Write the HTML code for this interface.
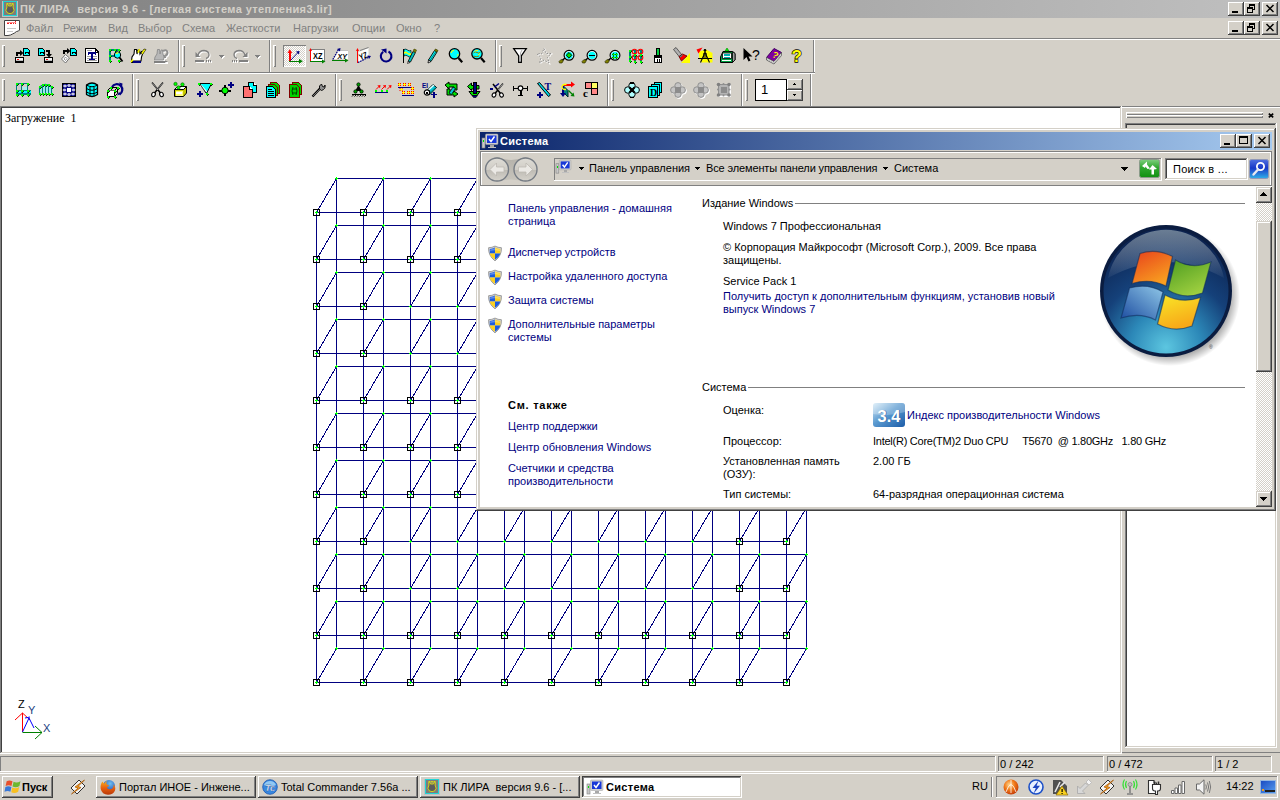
<!DOCTYPE html>
<html lang="ru"><head><meta charset="utf-8"><title>ПК ЛИРА</title>
<style>
html,body{margin:0;padding:0}
body{width:1280px;height:800px;overflow:hidden;background:#d4d0c8;position:relative;font-family:"Liberation Sans",sans-serif;font-size:11px}
svg{position:absolute;overflow:visible}
</style></head><body>
<div style="position:absolute;left:0;top:0;width:1280px;height:18px;background:linear-gradient(90deg,#808080 0%,#c0c0c0 100%)"></div>
<svg style="left:2px;top:1px" width="16" height="16" viewBox="0 0 16 16" shape-rendering="crispEdges"><rect x="0" y="0" width="16" height="16" fill="#c0c0c0"/><rect x="1.500" y=".5" width="13" height="14" fill="#7c7c7c" stroke="#20d4d4"/><path d="M5.200 2Q4.200 4 5 6Q2.500 9.500 5.500 12Q8 13.200 10.500 12Q13.500 9.500 11 6Q11.800 4 10.800 2Q10 4.500 9.500 5H6.500Q6 4.500 5.200 2Z" fill="#5c5c5c" stroke="#f0f000" stroke-width=".8" shape-rendering="auto"/><path d="M6.500 2.800H9.500" stroke="#f0f000" stroke-width="1" shape-rendering="auto"/></svg>
<div style="position:absolute;left:20px;top:3px;font-family:'Liberation Sans',sans-serif;font-size:11px;line-height:13px;color:#d4d0c8;white-space:pre;font-weight:bold;letter-spacing:0.4px">ПК ЛИРА  версия 9.6 - [легкая система утепления3.lir]</div>
<div style="position:absolute;left:1228px;top:2px;width:16px;height:14px;background:#d4d0c8;box-shadow:inset -1px -1px 0 #404040,inset 1px 1px 0 #ffffff,inset -2px -2px 0 #808080,inset 2px 2px 0 #d4d0c8;"><svg style="left:0;top:0" width="16" height="14" viewBox="0 0 16 14" shape-rendering="crispEdges"><rect x="4" y="9" width="6" height="2" fill="#000"/></svg></div>
<div style="position:absolute;left:1244px;top:2px;width:16px;height:14px;background:#d4d0c8;box-shadow:inset -1px -1px 0 #404040,inset 1px 1px 0 #ffffff,inset -2px -2px 0 #808080,inset 2px 2px 0 #d4d0c8;"><svg style="left:0;top:0" width="16" height="14" viewBox="0 0 16 14" shape-rendering="crispEdges"><rect x="5.5" y="2.5" width="5" height="5" fill="none" stroke="#000"/><rect x="5" y="2" width="6" height="2" fill="#000"/><rect x="3.5" y="5.5" width="5" height="5" fill="#d4d0c8" stroke="#000"/><rect x="3" y="5" width="6" height="2" fill="#000"/></svg></div>
<div style="position:absolute;left:1262px;top:2px;width:16px;height:14px;background:#d4d0c8;box-shadow:inset -1px -1px 0 #404040,inset 1px 1px 0 #ffffff,inset -2px -2px 0 #808080,inset 2px 2px 0 #d4d0c8;"><svg style="left:0;top:0" width="16" height="14" viewBox="0 0 16 14" shape-rendering="crispEdges"><path d="M4.5 3 L11.5 10 M11.5 3 L4.5 10" stroke="#000" stroke-width="1.5" shape-rendering="auto" fill="none"/></svg></div>
<div style="position:absolute;left:1228px;top:21px;width:16px;height:14px;background:#d4d0c8;box-shadow:inset -1px -1px 0 #404040,inset 1px 1px 0 #ffffff,inset -2px -2px 0 #808080,inset 2px 2px 0 #d4d0c8;"><svg style="left:0;top:0" width="16" height="14" viewBox="0 0 16 14" shape-rendering="crispEdges"><rect x="4" y="9" width="6" height="2" fill="#000"/></svg></div>
<div style="position:absolute;left:1244px;top:21px;width:16px;height:14px;background:#d4d0c8;box-shadow:inset -1px -1px 0 #404040,inset 1px 1px 0 #ffffff,inset -2px -2px 0 #808080,inset 2px 2px 0 #d4d0c8;"><svg style="left:0;top:0" width="16" height="14" viewBox="0 0 16 14" shape-rendering="crispEdges"><rect x="5.5" y="2.5" width="5" height="5" fill="none" stroke="#000"/><rect x="5" y="2" width="6" height="2" fill="#000"/><rect x="3.5" y="5.5" width="5" height="5" fill="#d4d0c8" stroke="#000"/><rect x="3" y="5" width="6" height="2" fill="#000"/></svg></div>
<div style="position:absolute;left:1262px;top:21px;width:16px;height:14px;background:#d4d0c8;box-shadow:inset -1px -1px 0 #404040,inset 1px 1px 0 #ffffff,inset -2px -2px 0 #808080,inset 2px 2px 0 #d4d0c8;"><svg style="left:0;top:0" width="16" height="14" viewBox="0 0 16 14" shape-rendering="crispEdges"><path d="M4.5 3 L11.5 10 M11.5 3 L4.5 10" stroke="#000" stroke-width="1.5" shape-rendering="auto" fill="none"/></svg></div>
<svg style="left:4px;top:20px" width="16" height="17" viewBox="0 0 16 17" shape-rendering="crispEdges"><path d="M.5 .5H15.500V10L14.500 11L12.500 11.500L10.500 13L8.500 14L6.500 15L4 15.500H.5Z" fill="#fff" stroke="#404040" shape-rendering="auto"/><rect x="3" y="2" width="2" height="2" fill="#f02020"/><rect x="6" y="2" width="2" height="2" fill="#f02020"/><rect x="9" y="2" width="1" height="2" fill="#f02020"/><rect x="11" y="1" width="1" height="3" fill="#f02020"/><rect x="3" y="2" width="9" height="1" fill="#ff9090"/><rect x="3" y="8" width="9" height="1" fill="#c8c8c8"/><rect x="3" y="11" width="6" height="1" fill="#c8c8c8"/></svg>
<div style="position:absolute;left:26px;top:22px;font-family:'Liberation Sans',sans-serif;font-size:11px;line-height:13px;color:#808080;white-space:pre;">Файл</div>
<div style="position:absolute;left:63px;top:22px;font-family:'Liberation Sans',sans-serif;font-size:11px;line-height:13px;color:#808080;white-space:pre;">Режим</div>
<div style="position:absolute;left:108px;top:22px;font-family:'Liberation Sans',sans-serif;font-size:11px;line-height:13px;color:#808080;white-space:pre;">Вид</div>
<div style="position:absolute;left:138px;top:22px;font-family:'Liberation Sans',sans-serif;font-size:11px;line-height:13px;color:#808080;white-space:pre;">Выбор</div>
<div style="position:absolute;left:182px;top:22px;font-family:'Liberation Sans',sans-serif;font-size:11px;line-height:13px;color:#808080;white-space:pre;">Схема</div>
<div style="position:absolute;left:226px;top:22px;font-family:'Liberation Sans',sans-serif;font-size:11px;line-height:13px;color:#808080;white-space:pre;">Жесткости</div>
<div style="position:absolute;left:293px;top:22px;font-family:'Liberation Sans',sans-serif;font-size:11px;line-height:13px;color:#808080;white-space:pre;">Нагрузки</div>
<div style="position:absolute;left:352px;top:22px;font-family:'Liberation Sans',sans-serif;font-size:11px;line-height:13px;color:#808080;white-space:pre;">Опции</div>
<div style="position:absolute;left:396px;top:22px;font-family:'Liberation Sans',sans-serif;font-size:11px;line-height:13px;color:#808080;white-space:pre;">Окно</div>
<div style="position:absolute;left:434px;top:22px;font-family:'Liberation Sans',sans-serif;font-size:11px;line-height:13px;color:#808080;white-space:pre;">?</div>
<div style="position:absolute;left:0px;top:38px;width:1280px;height:1px;background:#808080;"></div>
<div style="position:absolute;left:0px;top:39px;width:1280px;height:1px;background:#ffffff;"></div>
<div style="position:absolute;left:0px;top:72px;width:815px;height:1px;background:#808080;"></div>
<div style="position:absolute;left:0px;top:73px;width:815px;height:1px;background:#ffffff;"></div>
<div style="position:absolute;left:2px;top:45px;width:3px;height:22px;background:#d4d0c8;box-shadow:inset 1px 1px 0 #ffffff,inset -1px -1px 0 #808080;"></div>
<div style="position:absolute;left:182px;top:45px;width:3px;height:22px;background:#d4d0c8;box-shadow:inset 1px 1px 0 #ffffff,inset -1px -1px 0 #808080;"></div>
<div style="position:absolute;left:273px;top:45px;width:3px;height:22px;background:#d4d0c8;box-shadow:inset 1px 1px 0 #ffffff,inset -1px -1px 0 #808080;"></div>
<div style="position:absolute;left:499px;top:45px;width:3px;height:22px;background:#d4d0c8;box-shadow:inset 1px 1px 0 #ffffff,inset -1px -1px 0 #808080;"></div>
<div style="position:absolute;left:178px;top:40px;width:1px;height:32px;background:#808080;"></div><div style="position:absolute;left:179px;top:40px;width:1px;height:32px;background:#ffffff;"></div>
<div style="position:absolute;left:269px;top:40px;width:1px;height:32px;background:#808080;"></div><div style="position:absolute;left:270px;top:40px;width:1px;height:32px;background:#ffffff;"></div>
<div style="position:absolute;left:495px;top:40px;width:1px;height:32px;background:#808080;"></div><div style="position:absolute;left:496px;top:40px;width:1px;height:32px;background:#ffffff;"></div>
<div style="position:absolute;left:813px;top:40px;width:1px;height:32px;background:#808080;"></div><div style="position:absolute;left:814px;top:40px;width:1px;height:32px;background:#ffffff;"></div>
<div style="position:absolute;left:2px;top:79px;width:3px;height:22px;background:#d4d0c8;box-shadow:inset 1px 1px 0 #ffffff,inset -1px -1px 0 #808080;"></div>
<div style="position:absolute;left:136px;top:79px;width:3px;height:22px;background:#d4d0c8;box-shadow:inset 1px 1px 0 #ffffff,inset -1px -1px 0 #808080;"></div>
<div style="position:absolute;left:339px;top:79px;width:3px;height:22px;background:#d4d0c8;box-shadow:inset 1px 1px 0 #ffffff,inset -1px -1px 0 #808080;"></div>
<div style="position:absolute;left:611px;top:79px;width:3px;height:22px;background:#d4d0c8;box-shadow:inset 1px 1px 0 #ffffff,inset -1px -1px 0 #808080;"></div>
<div style="position:absolute;left:745px;top:79px;width:3px;height:22px;background:#d4d0c8;box-shadow:inset 1px 1px 0 #ffffff,inset -1px -1px 0 #808080;"></div>
<div style="position:absolute;left:132px;top:74px;width:1px;height:32px;background:#808080;"></div><div style="position:absolute;left:133px;top:74px;width:1px;height:32px;background:#ffffff;"></div>
<div style="position:absolute;left:335px;top:74px;width:1px;height:32px;background:#808080;"></div><div style="position:absolute;left:336px;top:74px;width:1px;height:32px;background:#ffffff;"></div>
<div style="position:absolute;left:607px;top:74px;width:1px;height:32px;background:#808080;"></div><div style="position:absolute;left:608px;top:74px;width:1px;height:32px;background:#ffffff;"></div>
<div style="position:absolute;left:741px;top:74px;width:1px;height:32px;background:#808080;"></div><div style="position:absolute;left:742px;top:74px;width:1px;height:32px;background:#ffffff;"></div>
<div style="position:absolute;left:810px;top:74px;width:1px;height:32px;background:#808080;"></div><div style="position:absolute;left:811px;top:74px;width:1px;height:32px;background:#ffffff;"></div>
<div style="position:absolute;left:283px;top:45px;width:23px;height:22px;background-color:#eae8e4;background-image:conic-gradient(#fff 25%,#d4d0c8 0 50%,#fff 0 75%,#d4d0c8 0);background-size:2px 2px;box-shadow:inset 1px 1px 0 #808080,inset -1px -1px 0 #ffffff;"></div>
<div style="position:absolute;left:755px;top:79px;width:32px;height:22px;background:#fff;box-shadow:inset 0 0 0 1px #000;"></div>
<div style="position:absolute;left:761px;top:82px;font-family:'Liberation Sans',sans-serif;font-size:13px;line-height:15px;color:#000;white-space:pre;">1</div>
<div style="position:absolute;left:787px;top:79px;width:16px;height:11px;background:#d4d0c8;box-shadow:inset -1px -1px 0 #404040,inset 1px 1px 0 #ffffff,inset -2px -2px 0 #808080,inset 2px 2px 0 #d4d0c8;"><svg style="left:0;top:0" width="16" height="11" viewBox="0 0 16 11" shape-rendering="crispEdges"><path d="M7 4h1v1h1v1h-3v-1h1z" fill="#000"/></svg></div>
<div style="position:absolute;left:787px;top:90px;width:16px;height:11px;background:#d4d0c8;box-shadow:inset -1px -1px 0 #404040,inset 1px 1px 0 #ffffff,inset -2px -2px 0 #808080,inset 2px 2px 0 #d4d0c8;"><svg style="left:0;top:0" width="16" height="11" viewBox="0 0 16 11" shape-rendering="crispEdges"><path d="M6 4h3v1h-1v1h-1v-1h-1z" fill="#000"/></svg></div>
<svg style="left:0;top:0" width="1280" height="110" viewBox="0 0 1280 110" shape-rendering="crispEdges"><g transform="translate(15,48)"><path d="M8.5 0.5H12.5L14.5 2.5V7.5H8.5Z" stroke="#000" fill="#00ffff" stroke-width="1"/><rect x="10" y="4" width="4" height="2" fill="#000"/><rect x="11" y="5" width="2" height="1" fill="#00ffff"/><rect x="0" y="9" width="9" height="6" fill="#000"/><rect x="1" y="10" width="7" height="3" fill="#f4f4f4"/><rect x="1" y="12" width="7" height="1" fill="#c0c0c0"/><rect x="2" y="11" width="2" height="1" fill="#ff0000"/><rect x="1" y="4" width="2" height="4" fill="#000"/><rect x="1" y="4" width="5" height="2" fill="#000"/><path d="M5 2L8.500 5L5 8Z" stroke="#000" fill="#000" stroke-width="0" shape-rendering="auto"/></g><g transform="translate(38,48)"><path d="M0.5 0.5H4.5L6.5 2.5V7.5H0.5Z" stroke="#000" fill="#00ffff" stroke-width="1"/><rect x="2" y="4" width="4" height="2" fill="#000"/><rect x="3" y="5" width="2" height="1" fill="#00ffff"/><rect x="6" y="9" width="9" height="6" fill="#000"/><rect x="7" y="10" width="7" height="3" fill="#f4f4f4"/><rect x="7" y="12" width="7" height="1" fill="#c0c0c0"/><rect x="8" y="11" width="2" height="1" fill="#ff0000"/><rect x="8" y="2" width="4" height="2" fill="#000"/><rect x="10" y="2" width="2" height="5" fill="#000"/><path d="M8 6H14L11 9.500Z" stroke="#000" fill="#000" stroke-width="0" shape-rendering="auto"/></g><g transform="translate(61,48)"><path d="M9.5 0.5H13.5L15.5 2.5V7.5H9.5Z" stroke="#000" fill="#00ffff" stroke-width="1"/><rect x="11" y="4" width="4" height="2" fill="#000"/><rect x="12" y="5" width="2" height="1" fill="#00ffff"/><rect x="2" y="2" width="2" height="4" fill="#000"/><rect x="2" y="2" width="5" height="2" fill="#000"/><path d="M6 0L9.500 3L6 6Z" stroke="#000" fill="#000" stroke-width="0" shape-rendering="auto"/><path d="M4.500 6.500L8.500 10L4.500 15L.5 11Z" stroke="#707070" fill="#fff" stroke-width="1" shape-rendering="auto"/><path d="M4.500 9L6 10.500L4.500 12.500L3 11Z" stroke="#808080" fill="none" stroke-width="0.8" shape-rendering="auto"/></g><g transform="translate(84,48)"><path d="M1.500 .5H11L14.500 4V14.500H1.500Z" stroke="#000" fill="#fff" stroke-width="1"/><path d="M11 .5V4H14.500" stroke="#000" fill="none" stroke-width="1"/><rect x="14" y="5" width="1" height="10" fill="#000"/><rect x="3" y="2" width="5" height="1" fill="#a0a0a0"/><rect x="3" y="8" width="10" height="1" fill="#a0a0a0"/><rect x="3" y="10" width="10" height="1" fill="#a0a0a0"/><rect x="3" y="12" width="10" height="1" fill="#a0a0a0"/><rect x="4" y="4" width="8" height="2" fill="#000080"/><rect x="4" y="5" width="1" height="2" fill="#000080"/><rect x="11" y="5" width="1" height="2" fill="#000080"/><rect x="7" y="4" width="2" height="7" fill="#000080"/><rect x="5" y="11" width="6" height="1" fill="#000080"/></g><g transform="translate(107,48)"><path d="M3 2H12M3 2V12M3 8H8M9 2V5" stroke="#008080" fill="none" stroke-width="2"/><rect x="1.5" y="1" width="2" height="2" fill="#00ff00"/><rect x="3.5" y="2" width="1" height="1" fill="#004000"/><rect x="2.5" y="3" width="1" height="1" fill="#004000"/><rect x="6.5" y="1" width="2" height="2" fill="#00ff00"/><rect x="8.5" y="2" width="1" height="1" fill="#004000"/><rect x="7.5" y="3" width="1" height="1" fill="#004000"/><rect x="11" y="1" width="2" height="2" fill="#00ff00"/><rect x="13" y="2" width="1" height="1" fill="#004000"/><rect x="12" y="3" width="1" height="1" fill="#004000"/><rect x="1.5" y="7" width="2" height="2" fill="#00ff00"/><rect x="3.5" y="8" width="1" height="1" fill="#004000"/><rect x="2.5" y="9" width="1" height="1" fill="#004000"/><rect x="1.5" y="11.5" width="2" height="2" fill="#00ff00"/><rect x="3.5" y="12.5" width="1" height="1" fill="#004000"/><rect x="2.5" y="13.5" width="1" height="1" fill="#004000"/><rect x="10.5" y="11.5" width="2" height="2" fill="#00ff00"/><rect x="12.5" y="12.5" width="1" height="1" fill="#004000"/><rect x="11.5" y="13.5" width="1" height="1" fill="#004000"/><circle cx="10.5" cy="7" r="3.2" fill="#00ffff" shape-rendering="auto" stroke="#000" stroke-width="1"/><path d="M9 6Q10 4.500 11.500 5" stroke="#ffff00" fill="none" stroke-width="1.2" shape-rendering="auto"/><path d="M12.500 9.500L15.500 13.500" stroke="#000" fill="none" stroke-width="1.8" shape-rendering="auto"/></g><g transform="translate(130,48)"><path d="M1.500 13L2 9L4 6L4.500 1.500L6.500 1.500L7 6L8 2L9.500 2L10 6L11.500 3.500L13 4.500L11.500 9L11 13Z" stroke="#000" fill="#fff" stroke-width="1.1" shape-rendering="auto"/><path d="M7.500 4L9 1L10 1.500L8.500 5Z" stroke="#ffff00" fill="#ffff00" stroke-width="0.5" shape-rendering="auto"/><path d="M11 5L14 1L16 1.500L12.500 6.500Z" stroke="#000" fill="#ffff00" stroke-width="0.6" shape-rendering="auto"/><rect x="2" y="13" width="9" height="2" fill="#000080"/><rect x="1" y="12" width="2" height="3" fill="#000"/><path d="M1 14L3 11.500" stroke="#ffff00" fill="none" stroke-width="1.6" shape-rendering="auto"/></g><g transform="translate(153,48)"><g transform="translate(1,1)"><path d="M1.500 12L2 9L4 6L4.500 1.500L6.500 1.500L7 6L8 2L9.500 2L10 6L11 9L10.500 12Z" stroke="#fff" fill="#fff" stroke-width="1" shape-rendering="auto"/><rect x="1" y="13" width="13" height="2" fill="#fff"/><path d="M10 3Q14 1 14.500 4.500Q14.500 7 12 8V10" stroke="#fff" fill="none" stroke-width="2" shape-rendering="auto"/></g><path d="M1.500 12L2 9L4 6L4.500 1.500L6.500 1.500L7 6L8 2L9.500 2L10 6L11 9L10.500 12Z" stroke="#909090" fill="#b8b8b8" stroke-width="1" shape-rendering="auto"/><rect x="1" y="12.5" width="11" height="2" fill="#808080"/><path d="M12 12.500L15 13.500L12 14.500Z" stroke="#808080" fill="#808080" stroke-width="0" shape-rendering="auto"/><path d="M10 3Q14 1 14.500 4.500Q14.500 7 12 8V10" stroke="#909090" fill="none" stroke-width="2" shape-rendering="auto"/></g><g transform="translate(195,48)"><g transform="translate(1,1)"><path d="M3 7Q4.500 2.500 9 2.500Q14 3 14 7Q13.500 10 11 10.500" stroke="#fff" fill="none" stroke-width="1.3" shape-rendering="auto"/><path d="M.5 4V9H5.500Z" stroke="#fff" fill="#fff" stroke-width="0" shape-rendering="auto"/><rect x="0" y="12" width="9" height="2" fill="#fff"/><rect x="11" y="12" width="1" height="2" fill="#fff"/><rect x="13" y="12" width="1" height="2" fill="#fff"/><rect x="15" y="12" width="1" height="2" fill="#fff"/></g><g transform="translate(0,0)"><path d="M3 7Q4.500 2.500 9 2.500Q14 3 14 7Q13.500 10 11 10.500" stroke="#808080" fill="none" stroke-width="1.3" shape-rendering="auto"/><path d="M.5 4V9H5.500Z" stroke="#808080" fill="#808080" stroke-width="0" shape-rendering="auto"/><rect x="0" y="12" width="9" height="2" fill="#808080"/><rect x="11" y="12" width="1" height="2" fill="#808080"/><rect x="13" y="12" width="1" height="2" fill="#808080"/><rect x="15" y="12" width="1" height="2" fill="#808080"/></g></g><g transform="translate(232,48)"><g transform="translate(1,1)"><path d="M13 7Q11.500 2.500 7 2.500Q2 3 2 7Q2.500 10 5 10.500" stroke="#fff" fill="none" stroke-width="1.3" shape-rendering="auto"/><path d="M15.500 4V9H10.500Z" stroke="#fff" fill="#fff" stroke-width="0" shape-rendering="auto"/><rect x="7" y="12" width="9" height="2" fill="#fff"/><rect x="4" y="12" width="1" height="2" fill="#fff"/><rect x="2" y="12" width="1" height="2" fill="#fff"/><rect x="0" y="12" width="1" height="2" fill="#fff"/></g><g transform="translate(0,0)"><path d="M13 7Q11.500 2.500 7 2.500Q2 3 2 7Q2.500 10 5 10.500" stroke="#808080" fill="none" stroke-width="1.3" shape-rendering="auto"/><path d="M15.500 4V9H10.500Z" stroke="#808080" fill="#808080" stroke-width="0" shape-rendering="auto"/><rect x="7" y="12" width="9" height="2" fill="#808080"/><rect x="4" y="12" width="1" height="2" fill="#808080"/><rect x="2" y="12" width="1" height="2" fill="#808080"/><rect x="0" y="12" width="1" height="2" fill="#808080"/></g></g><g transform="translate(219,48)"><g transform="translate(1,1)"><rect x="0" y="7" width="5" height="1" fill="#fff"/><rect x="1" y="8" width="3" height="1" fill="#fff"/><rect x="2" y="9" width="1" height="1" fill="#fff"/></g><g transform="translate(0,0)"><rect x="0" y="7" width="5" height="1" fill="#808080"/><rect x="1" y="8" width="3" height="1" fill="#808080"/><rect x="2" y="9" width="1" height="1" fill="#808080"/></g></g><g transform="translate(255,48)"><g transform="translate(1,1)"><rect x="0" y="7" width="5" height="1" fill="#fff"/><rect x="1" y="8" width="3" height="1" fill="#fff"/><rect x="2" y="9" width="1" height="1" fill="#fff"/></g><g transform="translate(0,0)"><rect x="0" y="7" width="5" height="1" fill="#808080"/><rect x="1" y="8" width="3" height="1" fill="#808080"/><rect x="2" y="9" width="1" height="1" fill="#808080"/></g></g><g transform="translate(286,48)"><rect x="3.2" y="3" width="1.3" height="11" fill="#ff0000"/><path d="M1.500 5L3.800 1.200L6.200 5Z" stroke="#ff0000" fill="#ff0000" stroke-width="0" shape-rendering="auto"/><rect x="3.2" y="12.7" width="11" height="1.3" fill="#008000"/><path d="M13 10.800L16.800 13.300L13 15.800Z" stroke="#008000" fill="#008000" stroke-width="0" shape-rendering="auto"/><path d="M4.500 12.500L11.500 5" stroke="#000080" fill="none" stroke-width="0.9" shape-rendering="auto"/><path d="M10 3.500L13.500 3L13 6.500Z" stroke="#000080" fill="#000080" stroke-width="0" shape-rendering="auto"/></g><g transform="translate(309,48)"><rect x="2" y="1" width="14" height="12" fill="#808080"/><rect x="2" y="2" width="13" height="11" fill="#fff"/><rect x="1" y="1" width="1" height="12" fill="#ff0000"/><path d="M0 3L1.500 0L3 3Z" stroke="#ff0000" fill="#ff0000" stroke-width="0" shape-rendering="auto"/><rect x="1" y="13" width="13" height="1" fill="#008000"/><path d="M13 11.500L16.500 13.500L13 15.500Z" stroke="#008000" fill="#008000" stroke-width="0" shape-rendering="auto"/><text x="4" y="10.5" font-family="Liberation Sans,sans-serif" font-size="8.5" fill="#000" font-weight="bold" textLength="9.500" lengthAdjust="spacingAndGlyphs">XZ</text></g><g transform="translate(332,48)"><path d="M7 2H16V3H7Z" stroke="#808080" fill="#808080" stroke-width="0"/><path d="M6.500 2.500H16V11H2Z" stroke="#fff" fill="#fff" stroke-width="0" shape-rendering="auto"/><path d="M.8 11.500L6.500 1.500" stroke="#000080" stroke-width="1.2" stroke-dasharray="1.6 .8" fill="none" shape-rendering="auto"/><path d="M5 1L8.500 0L8 3.500Z" stroke="#000080" fill="#000080" stroke-width="0" shape-rendering="auto"/><rect x="0" y="12" width="14" height="1" fill="#008000"/><path d="M13 10.500L16.500 12.500L13 14.500Z" stroke="#008000" fill="#008000" stroke-width="0" shape-rendering="auto"/><text x="5.5" y="10.5" font-family="Liberation Sans,sans-serif" font-size="8" fill="#000" font-weight="bold" textLength="9.500" lengthAdjust="spacingAndGlyphs" font-style="italic">XY</text></g><g transform="translate(355,48)"><path d="M3.500 4L13.500 0V9L3.500 14Z" stroke="#fff" fill="#fff" stroke-width="0" shape-rendering="auto"/><path d="M5 2.500L13.500 -.5" stroke="#808080" fill="none" stroke-width="1" shape-rendering="auto"/><rect x="2" y="1" width="1" height="14" fill="#ff0000"/><path d="M1 3L2.500 0L4 3Z" stroke="#ff0000" fill="#ff0000" stroke-width="0" shape-rendering="auto"/><path d="M3 14.500L14 9" stroke="#000080" stroke-width="1.2" stroke-dasharray="1.6 .8" fill="none" shape-rendering="auto"/><path d="M12.500 7.500L16 8L14 11Z" stroke="#000080" fill="#000080" stroke-width="0" shape-rendering="auto"/><text x="4.5" y="11" font-family="Liberation Sans,sans-serif" font-size="8.5" fill="#000" font-weight="bold" textLength="8.500" lengthAdjust="spacingAndGlyphs" transform="rotate(-22 8 9)">YZ</text></g><g transform="translate(378,48)"><path d="M5.200 3.800A5.300 5.300 0 1 0 10.500 3.500" stroke="#000080" fill="none" stroke-width="2.1" shape-rendering="auto"/><path d="M3 1.500L8.500 .5V5.500Z" stroke="#000080" fill="#000080" stroke-width="0" shape-rendering="auto"/></g><g transform="translate(401,48)"><rect x="2" y="1" width="1" height="14" fill="#000"/><path d="M3 1.500Q5 .5 6.500 2T10 2.500V9Q8 9.500 6.500 8T3 8Z" stroke="#000" fill="#00ffff" stroke-width="0.7" shape-rendering="auto"/><path d="M3 4Q5 3 6.500 4.500T10 5V7Q8 7.500 6.500 6T3 6Z" stroke="none" fill="#ffff00" stroke-width="0" shape-rendering="auto"/><path d="M7 13.500L12 3.500L14.500 4.500L9.500 14Z" stroke="#000" fill="#00c0c0" stroke-width="0.8" shape-rendering="auto"/><path d="M12 3.500L13 1L15.500 2L14.500 4.500Z" stroke="#404000" fill="#808000" stroke-width="0.6" shape-rendering="auto"/><path d="M7 13.500L6.500 15.500L9 14.500Z" stroke="#000" fill="#fff" stroke-width="0.6" shape-rendering="auto"/></g><g transform="translate(424,48)"><path d="M4.500 12L10.500 2.500L13 4L7 13.500Z" stroke="#000" fill="#00ffff" stroke-width="0.9" shape-rendering="auto"/><path d="M6 12.500L12 3.500" stroke="#008080" fill="none" stroke-width="1" shape-rendering="auto"/><path d="M10.500 2.500L11.500 1L14 2.500L13 4Z" stroke="#404000" fill="#808000" stroke-width="0.8" shape-rendering="auto"/><path d="M4.500 12L4 15L7 13.500Z" stroke="#000" fill="#fff" stroke-width="0.8" shape-rendering="auto"/></g><g transform="translate(447,48)"><circle cx="7.5" cy="5.8" r="5.2" fill="#00ffff" shape-rendering="auto" stroke="#000" stroke-width="1.3"/><path d="M11.500 10L15.200 14.200" stroke="#000" fill="none" stroke-width="2.2" shape-rendering="auto"/><path d="M4 5Q4.500 2.500 7 2.200" stroke="#ffff00" fill="none" stroke-width="1.1" shape-rendering="auto"/><path d="M10 8.500Q11 7.500 11 6" stroke="#ffff00" fill="none" stroke-width="1" shape-rendering="auto"/></g><g transform="translate(470,48)"><circle cx="7" cy="5.8" r="5.2" fill="#00ffff" shape-rendering="auto" stroke="#000" stroke-width="1.3"/><path d="M11 10L14.700 14.200" stroke="#000" fill="none" stroke-width="2.2" shape-rendering="auto"/><path d="M3.500 5Q5 3 7 4.500T10.500 4M3.500 8Q6 9.500 9 8" stroke="#808000" fill="none" stroke-width="1" shape-rendering="auto"/><path d="M4.500 3.500Q6 2 8 2.500M8 7L10 5.500" stroke="#ffff00" fill="none" stroke-width="1" shape-rendering="auto"/></g><g transform="translate(513,48)"><path d="M.7 .7H13.300L8.300 8V14.300H5.700V8Z" stroke="#000" fill="#fff" stroke-width="1.3" shape-rendering="auto"/><path d="M9 2L7.500 5V13" stroke="#b0b0b0" fill="none" stroke-width="1" shape-rendering="auto"/></g><g transform="translate(536,48)"><path d="M8 .5L10 5.500L15 5.500L11.500 9.500L13 15L8 12L3.500 15L5 9.500L1 6L6 5.500Z" stroke="#fff" fill="none" stroke-width="1.2" stroke-dasharray="1.5 1.5" shape-rendering="auto" transform="translate(.7,.7)"/><path d="M8 .5L10 5.500L15 5.500L11.500 9.500L13 15L8 12L3.500 15L5 9.500L1 6L6 5.500Z" stroke="#909090" fill="none" stroke-width="1" stroke-dasharray="1.5 1.5" shape-rendering="auto"/></g><g transform="translate(559,48)"><path d="M2.500 13L6 10" stroke="#000" fill="none" stroke-width="1.5" shape-rendering="auto"/><path d="M0 13.500L2 11.500L4.500 12.500L3 15L.5 15Z" stroke="#202000" fill="#808000" stroke-width="0.6" shape-rendering="auto"/><circle cx="10" cy="7.3" r="4.9" fill="#fff" shape-rendering="auto" stroke="#000" stroke-width="1.2"/><circle cx="10" cy="7.3" r="3.6" fill="#00ffff" shape-rendering="auto"/><path d="M10 4.500L12.800 7.300L10 10.100L7.200 7.300Z" stroke="#000" fill="#00e000" stroke-width="0.9" shape-rendering="auto"/></g><g transform="translate(582,48)"><path d="M2.500 13L6 10" stroke="#000" fill="none" stroke-width="1.5" shape-rendering="auto"/><path d="M0 13.500L2 11.500L4.500 12.500L3 15L.5 15Z" stroke="#202000" fill="#808000" stroke-width="0.6" shape-rendering="auto"/><circle cx="10" cy="7.3" r="4.9" fill="#fff" shape-rendering="auto" stroke="#000" stroke-width="1.2"/><circle cx="10" cy="7.3" r="3.6" fill="#00ffff" shape-rendering="auto"/><rect x="7" y="6.5" width="6" height="1.5" fill="#000"/></g><g transform="translate(605,48)"><path d="M2.500 13L6 10" stroke="#000" fill="none" stroke-width="1.5" shape-rendering="auto"/><path d="M0 13.500L2 11.500L4.500 12.500L3 15L.5 15Z" stroke="#202000" fill="#808000" stroke-width="0.6" shape-rendering="auto"/><circle cx="10" cy="7.3" r="4.9" fill="#fff" shape-rendering="auto" stroke="#000" stroke-width="1.2"/><circle cx="10" cy="7.3" r="3.6" fill="#00ffff" shape-rendering="auto"/><path d="M8.500 4.500V10.500M11.500 4.500V10.500M7 6H13M7 9H13" stroke="#008000" fill="none" stroke-width="1"/><rect x="8" y="5.5" width="1.5" height="1.5" fill="#00ff00"/><rect x="11" y="5.5" width="1.5" height="1.5" fill="#00ff00"/><rect x="8" y="8.5" width="1.5" height="1.5" fill="#00ff00"/><rect x="11" y="8.5" width="1.5" height="1.5" fill="#00ff00"/></g><g transform="translate(628,48)"><path d="M2 2V13M2 2.500H14M2 8.500H14M7 2V13M13 2V13" stroke="#008080" fill="none" stroke-width="1.3"/><circle cx="6.5" cy="3.5" r="2.3" fill="none" shape-rendering="auto" stroke="#ff0000" stroke-width="1.1"/><circle cx="6.5" cy="9.5" r="2.3" fill="none" shape-rendering="auto" stroke="#ff0000" stroke-width="1.1"/><circle cx="12.5" cy="3.5" r="2.3" fill="none" shape-rendering="auto" stroke="#ff0000" stroke-width="1.1"/><circle cx="12.5" cy="9.5" r="2.3" fill="none" shape-rendering="auto" stroke="#ff0000" stroke-width="1.1"/><rect x="1" y="7.5" width="2" height="2" fill="#00ff00"/><rect x="3" y="8.5" width="1" height="1" fill="#004000"/><rect x="2" y="9.5" width="1" height="1" fill="#004000"/><rect x="1" y="12" width="2" height="2" fill="#00ff00"/><rect x="3" y="13" width="1" height="1" fill="#004000"/><rect x="2" y="14" width="1" height="1" fill="#004000"/><rect x="6" y="12.5" width="2" height="2" fill="#00ff00"/><rect x="8" y="13.5" width="1" height="1" fill="#004000"/><rect x="7" y="14.5" width="1" height="1" fill="#004000"/><rect x="12" y="12.5" width="2" height="2" fill="#00ff00"/><rect x="14" y="13.5" width="1" height="1" fill="#004000"/><rect x="13" y="14.5" width="1" height="1" fill="#004000"/><rect x="6" y="5.5" width="2" height="2" fill="#00ff00"/><rect x="8" y="6.5" width="1" height="1" fill="#004000"/><rect x="7" y="7.5" width="1" height="1" fill="#004000"/><rect x="12" y="5.5" width="2" height="2" fill="#00ff00"/><rect x="14" y="6.5" width="1" height="1" fill="#004000"/><rect x="13" y="7.5" width="1" height="1" fill="#004000"/><rect x="1" y="1.5" width="2" height="2" fill="#00ff00"/><rect x="3" y="2.5" width="1" height="1" fill="#004000"/><rect x="2" y="3.5" width="1" height="1" fill="#004000"/></g><g transform="translate(651,48)"><rect x="5.5" y="0.5" width="3" height="7" fill="#00d040" stroke="#000"/><rect x="3" y="7" width="8" height="2" fill="#000"/><rect x="3.5" y="9.5" width="7" height="5" fill="#fff" stroke="#000"/><rect x="6" y="11" width="1" height="3" fill="#000"/><rect x="8" y="11" width="1" height="3" fill="#000"/></g><g transform="translate(674,48)"><path d="M7 15H16V5Z" stroke="#ffff00" fill="#ffff00" stroke-width="0" shape-rendering="auto"/><path d="M-.5 1.500L2 -.5L8 7L5.500 9Z" stroke="#404040" fill="#b0b0b0" stroke-width="0.8" shape-rendering="auto"/><path d="M5 8.500L8.500 6L13 8L7.500 13Z" stroke="#600000" fill="#ff0000" stroke-width="0.8" shape-rendering="auto"/><path d="M6 9L8.500 7" stroke="#00c0c0" fill="none" stroke-width="1" shape-rendering="auto"/></g><g transform="translate(697,48)"><path d="M2 3.500L9 1.500L15.500 5V14.500H4.500L2 9Z" stroke="#ffff00" fill="#ffff00" stroke-width="0" shape-rendering="auto"/><path d="M-.5 1.500L5.500 -.5L1.500 5.500Z" stroke="#ff0000" fill="#ff0000" stroke-width="0" shape-rendering="auto"/><path d="M8 1V4M8 4.500L3.500 14.500M8 4.500L12.500 14.500M5.500 9H10.500M1 10.500H15" stroke="#000" fill="none" stroke-width="1.1" shape-rendering="auto"/><circle cx="8" cy="2.2" r="1.3" fill="#000" shape-rendering="auto"/><circle cx="8" cy="6" r="1.4" fill="none" shape-rendering="auto" stroke="#000" stroke-width="0.8"/></g><g transform="translate(720,48)"><path d="M.5 9L3 3.500H12.500L15 5.500V12L12.500 14.500H.5Z" stroke="#000" fill="#00a040" stroke-width="1" shape-rendering="auto"/><path d="M12.500 3.500L15 5.500V12L12.500 14.500Z" stroke="#000" fill="#a0a0a0" stroke-width="0.8" shape-rendering="auto"/><path d="M2.500 5H11.500V10.500H2.500Z" stroke="#000" fill="#fff" stroke-width="0.8" shape-rendering="auto"/><rect x="3.5" y="6" width="6" height="1.5" fill="#00b0b0"/><rect x="3.5" y="8.5" width="6" height="1" fill="#00b0b0"/><rect x="1.5" y="12" width="9" height="1" fill="#fff"/><path d="M7 0L9 3H5Z" stroke="#008000" fill="#00ff00" stroke-width="0.6" shape-rendering="auto"/></g><g transform="translate(743,48)"><path d="M.5 0V12L3.500 9L5.500 13.500L7.500 12.500L5.500 8.500H9.500Z" stroke="#000" fill="#000" stroke-width="0" shape-rendering="auto"/><text x="9" y="11.5" font-family="Liberation Sans,sans-serif" font-size="14" fill="#000" >?</text></g><g transform="translate(766,48)"><path d="M.5 9.500L8 .5L15.500 4.500L8 13.500Z" stroke="#400060" fill="#8000a0" stroke-width="1" shape-rendering="auto"/><path d="M.5 9.500L8 13.500L15.500 4.500V7.500L8 16L.5 12Z" stroke="#505050" fill="#fff" stroke-width="0.8" shape-rendering="auto"/><path d="M1 11L8 15L15 6.500" stroke="#a0a0a0" fill="none" stroke-width="0.7" shape-rendering="auto"/><text x="6.5" y="10" font-family="Liberation Sans,sans-serif" font-size="9" fill="#ffff00" font-weight="bold" transform="rotate(28 9 7)">?</text></g><g transform="translate(789,48)"><text x="2.5" y="14" font-family="Liberation Sans,sans-serif" font-size="17" fill="#ffff00" font-weight="bold" stroke="#000" stroke-width="1.3" paint-order="stroke">?</text></g><g transform="translate(15,82)"><rect x="1" y="8" width="15" height="4" fill="#00ffff"/><rect x="8" y="5" width="5" height="3" fill="#a0f0f0"/><path d="M1.500 1V12M6.500 1V12M12.500 1V12M1 1.500H13M1 8.500H16M1 12H16" stroke="#008080" fill="none" stroke-width="1.6"/><rect x="2.5" y="2.5" width="3" height="5" fill="#c8c8c8"/><rect x="0.5" y="0.5" width="2" height="2" fill="#00ff00"/><rect x="2.5" y="1.5" width="1" height="1" fill="#004000"/><rect x="1.5" y="2.5" width="1" height="1" fill="#004000"/><rect x="0.5" y="7.5" width="2" height="2" fill="#00ff00"/><rect x="2.5" y="8.5" width="1" height="1" fill="#004000"/><rect x="1.5" y="9.5" width="1" height="1" fill="#004000"/><rect x="0.5" y="11.5" width="2" height="2" fill="#00ff00"/><rect x="2.5" y="12.5" width="1" height="1" fill="#004000"/><rect x="1.5" y="13.5" width="1" height="1" fill="#004000"/><rect x="5.5" y="0.5" width="2" height="2" fill="#00ff00"/><rect x="7.5" y="1.5" width="1" height="1" fill="#004000"/><rect x="6.5" y="2.5" width="1" height="1" fill="#004000"/><rect x="5.5" y="7.5" width="2" height="2" fill="#00ff00"/><rect x="7.5" y="8.5" width="1" height="1" fill="#004000"/><rect x="6.5" y="9.5" width="1" height="1" fill="#004000"/><rect x="5.5" y="11.5" width="2" height="2" fill="#00ff00"/><rect x="7.5" y="12.5" width="1" height="1" fill="#004000"/><rect x="6.5" y="13.5" width="1" height="1" fill="#004000"/><rect x="11.5" y="0.5" width="2" height="2" fill="#00ff00"/><rect x="13.5" y="1.5" width="1" height="1" fill="#004000"/><rect x="12.5" y="2.5" width="1" height="1" fill="#004000"/><rect x="11.5" y="7.5" width="2" height="2" fill="#00ff00"/><rect x="13.5" y="8.5" width="1" height="1" fill="#004000"/><rect x="12.5" y="9.5" width="1" height="1" fill="#004000"/><rect x="11.5" y="11.5" width="2" height="2" fill="#00ff00"/><rect x="13.5" y="12.5" width="1" height="1" fill="#004000"/><rect x="12.5" y="13.5" width="1" height="1" fill="#004000"/></g><g transform="translate(38,82)"><path d="M1.500 11V5Q4 2 7.500 2Q12 2 14.500 5V11Z" stroke="none" fill="#a0f0f0" stroke-width="0" shape-rendering="auto"/><path d="M1.500 12V5M4.500 12V3.500M7.500 12V2.500M10.500 12V3.500M13.500 12V5M1.500 5Q7.500 -.5 13.500 5" stroke="#008080" fill="none" stroke-width="1.1" shape-rendering="auto"/><rect x="0.5" y="11" width="2" height="2" fill="#00ff00"/><rect x="2.5" y="12" width="1" height="1" fill="#004000"/><rect x="1.5" y="13" width="1" height="1" fill="#004000"/><rect x="3.5" y="11" width="2" height="2" fill="#00ff00"/><rect x="5.5" y="12" width="1" height="1" fill="#004000"/><rect x="4.5" y="13" width="1" height="1" fill="#004000"/><rect x="6.5" y="11" width="2" height="2" fill="#00ff00"/><rect x="8.5" y="12" width="1" height="1" fill="#004000"/><rect x="7.5" y="13" width="1" height="1" fill="#004000"/><rect x="9.5" y="11" width="2" height="2" fill="#00ff00"/><rect x="11.5" y="12" width="1" height="1" fill="#004000"/><rect x="10.5" y="13" width="1" height="1" fill="#004000"/><rect x="12.5" y="11" width="2" height="2" fill="#00ff00"/><rect x="14.5" y="12" width="1" height="1" fill="#004000"/><rect x="13.5" y="13" width="1" height="1" fill="#004000"/><rect x="0.5" y="4" width="2" height="2" fill="#00ff00"/><rect x="2.5" y="5" width="1" height="1" fill="#004000"/><rect x="1.5" y="6" width="1" height="1" fill="#004000"/><rect x="3.5" y="2" width="2" height="2" fill="#00ff00"/><rect x="5.5" y="3" width="1" height="1" fill="#004000"/><rect x="4.5" y="4" width="1" height="1" fill="#004000"/><rect x="6.5" y="1.5" width="2" height="2" fill="#00ff00"/><rect x="8.5" y="2.5" width="1" height="1" fill="#004000"/><rect x="7.5" y="3.5" width="1" height="1" fill="#004000"/><rect x="9.5" y="2" width="2" height="2" fill="#00ff00"/><rect x="11.5" y="3" width="1" height="1" fill="#004000"/><rect x="10.5" y="4" width="1" height="1" fill="#004000"/><rect x="12.5" y="4" width="2" height="2" fill="#00ff00"/><rect x="14.5" y="5" width="1" height="1" fill="#004000"/><rect x="13.5" y="6" width="1" height="1" fill="#004000"/></g><g transform="translate(61,82)"><rect x="1.5" y="1.5" width="13" height="13" fill="#000080" stroke="#000"/><rect x="6" y="6" width="4" height="4" fill="#fff"/><ellipse cx="4" cy="4" rx="1.500" ry="1.100" fill="#c0c0e0" stroke="#fff" stroke-width=".5" shape-rendering="auto"/><ellipse cx="8" cy="3.5" rx="1.500" ry="1.100" fill="#c0c0e0" stroke="#fff" stroke-width=".5" shape-rendering="auto"/><ellipse cx="12" cy="4" rx="1.500" ry="1.100" fill="#c0c0e0" stroke="#fff" stroke-width=".5" shape-rendering="auto"/><ellipse cx="3.5" cy="8" rx="1.500" ry="1.100" fill="#c0c0e0" stroke="#fff" stroke-width=".5" shape-rendering="auto"/><ellipse cx="12.5" cy="8" rx="1.500" ry="1.100" fill="#c0c0e0" stroke="#fff" stroke-width=".5" shape-rendering="auto"/><ellipse cx="4" cy="12" rx="1.500" ry="1.100" fill="#c0c0e0" stroke="#fff" stroke-width=".5" shape-rendering="auto"/><ellipse cx="8" cy="12.5" rx="1.500" ry="1.100" fill="#c0c0e0" stroke="#fff" stroke-width=".5" shape-rendering="auto"/><ellipse cx="12" cy="12" rx="1.500" ry="1.100" fill="#c0c0e0" stroke="#fff" stroke-width=".5" shape-rendering="auto"/></g><g transform="translate(84,82)"><path d="M2.500 3V12.500Q8 16.500 13.500 12.500V3Q8 -1 2.500 3Z" stroke="#000" fill="#00ffff" stroke-width="1.3" shape-rendering="auto"/><path d="M2.500 3Q8 6.500 13.500 3M2.500 6.500Q8 10 13.500 6.500M2.500 10Q8 13.500 13.500 10M6 5V14.500M10 5V14.500" stroke="#000" fill="none" stroke-width="1" shape-rendering="auto"/></g><g transform="translate(107,82)"><path d="M5 5A5.500 5.500 0 1 1 12.500 12.500" stroke="#000080" fill="none" stroke-width="2.2" shape-rendering="auto"/><path d="M12 .5L15.500 1.500L15 6Z" stroke="#000080" fill="#000080" stroke-width="0" shape-rendering="auto"/><path d="M10 13.500L14 12L12 10Z" stroke="#000080" fill="#000080" stroke-width="0" shape-rendering="auto"/><path d="M.5 8.500H7.500V14.500H.5Z" stroke="#000" fill="#fff" stroke-width="1"/><path d="M.5 8.500L3.500 5.500H10.500L7.500 8.500M10.500 5.500V11.500L7.500 14.500" stroke="#000" fill="#d4d0c8" stroke-width="1" shape-rendering="auto"/><rect x="-0.5" y="7.5" width="2" height="2" fill="#00ff00"/><rect x="1.5" y="8.5" width="1" height="1" fill="#004000"/><rect x="0.5" y="9.5" width="1" height="1" fill="#004000"/><rect x="6.5" y="7.5" width="2" height="2" fill="#00ff00"/><rect x="8.5" y="8.5" width="1" height="1" fill="#004000"/><rect x="7.5" y="9.5" width="1" height="1" fill="#004000"/><rect x="3" y="4.5" width="2" height="2" fill="#00ff00"/><rect x="5" y="5.5" width="1" height="1" fill="#004000"/><rect x="4" y="6.5" width="1" height="1" fill="#004000"/><rect x="9.5" y="4.5" width="2" height="2" fill="#00ff00"/><rect x="11.5" y="5.5" width="1" height="1" fill="#004000"/><rect x="10.5" y="6.5" width="1" height="1" fill="#004000"/><rect x="-0.5" y="13.5" width="2" height="2" fill="#00ff00"/><rect x="1.5" y="14.5" width="1" height="1" fill="#004000"/><rect x="0.5" y="15.5" width="1" height="1" fill="#004000"/><rect x="6.5" y="13.5" width="2" height="2" fill="#00ff00"/><rect x="8.5" y="14.5" width="1" height="1" fill="#004000"/><rect x="7.5" y="15.5" width="1" height="1" fill="#004000"/></g><g transform="translate(150,82)"><path d="M2 .5L10.500 11M13 .5L4.500 11" stroke="#000" fill="none" stroke-width="1.5" shape-rendering="auto"/><path d="M2 .5L8 8M13 .5L7 8" stroke="#fff" fill="none" stroke-width="0.5" shape-rendering="auto"/><ellipse cx="3.500" cy="12.500" rx="1.800" ry="2.200" fill="#fff" stroke="#000" stroke-width="1.1" shape-rendering="auto" transform="rotate(25 3.500 12.500)"/><ellipse cx="11.500" cy="12.500" rx="1.800" ry="2.200" fill="#fff" stroke="#000" stroke-width="1.1" shape-rendering="auto" transform="rotate(-25 11.500 12.500)"/></g><g transform="translate(173,82)"><path d="M1.500 7.500H10.500L13.500 4.500V11L10.500 14.500H1.500Z" stroke="#000" fill="#c8c800" stroke-width="1" shape-rendering="auto"/><path d="M1.500 7.500L4.500 4.500H13.500L10.500 7.500Z" stroke="#000" fill="#fff" stroke-width="1" shape-rendering="auto"/><rect x="2.5" y="8.5" width="7" height="5" fill="#ffff80"/><rect x="3" y="10" width="6" height="2" fill="#fff"/><circle cx="2.5" cy="2" r="1.7" fill="#00ff00" shape-rendering="auto" stroke="#006000" stroke-width="0.6"/><circle cx="9.5" cy="2.5" r="1.7" fill="#00ff00" shape-rendering="auto" stroke="#006000" stroke-width="0.6"/><circle cx="5.5" cy="5.5" r="1.7" fill="#00ff00" shape-rendering="auto" stroke="#006000" stroke-width="0.6"/></g><g transform="translate(196,82)"><path d="M3.500 1.500H15.500L10.500 11.500Z" stroke="#000" fill="#00ffff" stroke-width="1" shape-rendering="auto"/><path d="M4.500 3L10.500 10" stroke="#fff" fill="none" stroke-width="1.8" shape-rendering="auto"/><path d="M3.500 1.500L10.500 11.500" stroke="#000" fill="none" stroke-width="0.8" shape-rendering="auto"/><rect x="2" y="0.5" width="2" height="2" fill="#00ff00"/><rect x="4" y="1.5" width="1" height="1" fill="#004000"/><rect x="3" y="2.5" width="1" height="1" fill="#004000"/><rect x="9.5" y="10.5" width="2" height="2" fill="#00ff00"/><rect x="11.5" y="11.5" width="1" height="1" fill="#004000"/><rect x="10.5" y="12.5" width="1" height="1" fill="#004000"/><rect x="14" y="0.5" width="2" height="2" fill="#00ff00"/><rect x="16" y="1.5" width="1" height="1" fill="#004000"/><rect x="15" y="2.5" width="1" height="1" fill="#004000"/><rect x="1" y="11" width="6" height="2" fill="#000080"/><rect x="3" y="9" width="2" height="6" fill="#000080"/></g><g transform="translate(219,82)"><rect x="5" y="3" width="2" height="11" fill="#000"/><rect x="0" y="7.5" width="12" height="2" fill="#000"/><circle cx="6" cy="8.5" r="3.2" fill="#00ff00" shape-rendering="auto" stroke="#000" stroke-width="1"/><rect x="9" y="2" width="6" height="2" fill="#000080"/><rect x="11" y="0" width="2" height="6" fill="#000080"/></g><g transform="translate(242,82)"><path d="M6.500 .5H11.500L14.500 3.500V10.500H6.500Z" stroke="#000" fill="#00ffff" stroke-width="1"/><path d="M11.500 .5V3.500H14.500" stroke="#000" fill="#fff" stroke-width="1"/><path d="M1.500 4.500H7.500L10.500 7.500V15.500H1.500Z" stroke="#000" fill="#ff7070" stroke-width="1"/><path d="M7.500 4.500V7.500H10.500" stroke="#000" fill="#fff" stroke-width="1"/></g><g transform="translate(265,82)"><path d="M5.500 .5H11.500L14.500 3.500V11.500H5.500Z" stroke="#800000" fill="#00d000" stroke-width="1"/><path d="M3.500 2.500H9.500L12.500 5.500V13.500H3.500Z" stroke="#800000" fill="#00d000" stroke-width="1"/><path d="M1.500 4.500H7.500L10.500 7.500V15.500H1.500Z" stroke="#000" fill="#00ffff" stroke-width="1"/><rect x="3" y="7" width="4" height="1" fill="#000"/><rect x="3" y="9" width="6" height="1" fill="#000"/><rect x="3" y="11" width="6" height="1" fill="#000"/><rect x="3" y="13" width="6" height="1" fill="#000"/></g><g transform="translate(288,82)"><path d="M4.500 .5H10.500L13.500 3.500V12.500H4.500Z" stroke="#800000" fill="#00d000" stroke-width="1"/><path d="M1.500 2.500H8.500L11.500 5.500V15.500H1.500Z" stroke="#800000" fill="#00d000" stroke-width="1"/><path d="M5 5Q3 9 5 13M8 5Q10 9 8 13M4 7H9M4 11H9" stroke="#004000" fill="none" stroke-width="1" shape-rendering="auto"/></g><g transform="translate(311,82)"><path d="M1.500 14.500L9 6.500" stroke="#000" fill="none" stroke-width="2.2" shape-rendering="auto"/><path d="M2 14L9 7" stroke="#909090" fill="none" stroke-width="0.8" shape-rendering="auto"/><path d="M8.500 7Q7.500 3.500 10.500 2L11.500 4.500L13 5L14 3Q15 7 10.500 8.500Z" stroke="#000" fill="#909090" stroke-width="0.9" shape-rendering="auto"/></g><g transform="translate(352,82)"><path d="M6.500 3L2 11H11Z" stroke="#000" fill="#000" stroke-width="0" shape-rendering="auto"/><rect x="5" y="8.5" width="3" height="2" fill="#e0e0e0"/><circle cx="6.5" cy="2.5" r="1.7" fill="#00a000" shape-rendering="auto" stroke="#000" stroke-width="0.7"/><circle cx="3.5" cy="9.5" r="1.7" fill="#00a000" shape-rendering="auto" stroke="#000" stroke-width="0.7"/><circle cx="9.5" cy="9.5" r="1.7" fill="#00a000" shape-rendering="auto" stroke="#000" stroke-width="0.7"/><rect x="0" y="11.5" width="14" height="1" fill="#000"/><path d="M0 14.500L2 12.500M2.500 14.500L4.500 12.500M5 14.500L7 12.500M7.500 14.500L9.500 12.500M10 14.500L12 12.500M12.500 14.500L14 13" stroke="#000" fill="none" stroke-width="1" shape-rendering="auto"/></g><g transform="translate(375,82)"><rect x="0" y="10" width="13" height="1.3" fill="#000080"/><path d="M1 7.5L4 4.5" stroke="#ff0000" fill="none" stroke-width="1" shape-rendering="auto"/><path d="M2.3 3.500L5.5 3L5 6.200Z" stroke="#ff0000" fill="#ff0000" stroke-width="0" shape-rendering="auto"/><rect x="0" y="8" width="2" height="2" fill="#00ff00"/><path d="M6.5 7.5L9.5 4.5" stroke="#ff0000" fill="none" stroke-width="1" shape-rendering="auto"/><path d="M7.8 3.500L11.0 3L10.5 6.200Z" stroke="#ff0000" fill="#ff0000" stroke-width="0" shape-rendering="auto"/><rect x="5.5" y="8" width="2" height="2" fill="#00ff00"/><path d="M12 7.5L15 4.5" stroke="#ff0000" fill="none" stroke-width="1" shape-rendering="auto"/><path d="M13.3 3.500L16.5 3L16 6.200Z" stroke="#ff0000" fill="#ff0000" stroke-width="0" shape-rendering="auto"/><rect x="11" y="8" width="2" height="2" fill="#00ff00"/></g><g transform="translate(398,82)"><rect x="0" y="4.5" width="13" height="1" fill="#000080"/><rect x="4" y="12.5" width="12" height="1" fill="#000080"/><path d="M0 1l3 3m0 -3l-3 3" stroke="#ff0000" fill="none" stroke-width="1" shape-rendering="auto"/><rect x="1" y="2" width="1" height="1" fill="#ffff00"/><rect x="1" y="1" width="1" height="1" fill="#ffff00"/><rect x="0" y="2" width="1" height="1" fill="#ffff00"/><rect x="2" y="2" width="1" height="1" fill="#ffff00"/><rect x="1" y="3" width="1" height="1" fill="#ffff00"/><path d="M5 1l3 3m0 -3l-3 3" stroke="#ff0000" fill="none" stroke-width="1" shape-rendering="auto"/><rect x="6" y="2" width="1" height="1" fill="#ffff00"/><rect x="6" y="1" width="1" height="1" fill="#ffff00"/><rect x="5" y="2" width="1" height="1" fill="#ffff00"/><rect x="7" y="2" width="1" height="1" fill="#ffff00"/><rect x="6" y="3" width="1" height="1" fill="#ffff00"/><path d="M10 1l3 3m0 -3l-3 3" stroke="#ff0000" fill="none" stroke-width="1" shape-rendering="auto"/><rect x="11" y="2" width="1" height="1" fill="#ffff00"/><rect x="11" y="1" width="1" height="1" fill="#ffff00"/><rect x="10" y="2" width="1" height="1" fill="#ffff00"/><rect x="12" y="2" width="1" height="1" fill="#ffff00"/><rect x="11" y="3" width="1" height="1" fill="#ffff00"/><path d="M13 5l3 3m0 -3l-3 3" stroke="#ff0000" fill="none" stroke-width="1" shape-rendering="auto"/><rect x="14" y="6" width="1" height="1" fill="#ffff00"/><rect x="14" y="5" width="1" height="1" fill="#ffff00"/><rect x="13" y="6" width="1" height="1" fill="#ffff00"/><rect x="15" y="6" width="1" height="1" fill="#ffff00"/><rect x="14" y="7" width="1" height="1" fill="#ffff00"/><path d="M1.5 6l3 3m0 -3l-3 3" stroke="#ff0000" fill="none" stroke-width="1" shape-rendering="auto"/><rect x="2.5" y="7" width="1" height="1" fill="#ffff00"/><rect x="2.5" y="6" width="1" height="1" fill="#ffff00"/><rect x="1.5" y="7" width="1" height="1" fill="#ffff00"/><rect x="3.5" y="7" width="1" height="1" fill="#ffff00"/><rect x="2.5" y="8" width="1" height="1" fill="#ffff00"/><path d="M4 9l3 3m0 -3l-3 3" stroke="#ff0000" fill="none" stroke-width="1" shape-rendering="auto"/><rect x="5" y="10" width="1" height="1" fill="#ffff00"/><rect x="5" y="9" width="1" height="1" fill="#ffff00"/><rect x="4" y="10" width="1" height="1" fill="#ffff00"/><rect x="6" y="10" width="1" height="1" fill="#ffff00"/><rect x="5" y="11" width="1" height="1" fill="#ffff00"/><path d="M9 9l3 3m0 -3l-3 3" stroke="#ff0000" fill="none" stroke-width="1" shape-rendering="auto"/><rect x="10" y="10" width="1" height="1" fill="#ffff00"/><rect x="10" y="9" width="1" height="1" fill="#ffff00"/><rect x="9" y="10" width="1" height="1" fill="#ffff00"/><rect x="11" y="10" width="1" height="1" fill="#ffff00"/><rect x="10" y="11" width="1" height="1" fill="#ffff00"/><path d="M13 9l3 3m0 -3l-3 3" stroke="#ff0000" fill="none" stroke-width="1" shape-rendering="auto"/><rect x="14" y="10" width="1" height="1" fill="#ffff00"/><rect x="14" y="9" width="1" height="1" fill="#ffff00"/><rect x="13" y="10" width="1" height="1" fill="#ffff00"/><rect x="15" y="10" width="1" height="1" fill="#ffff00"/><rect x="14" y="11" width="1" height="1" fill="#ffff00"/></g><g transform="translate(421,82)"><text x="1" y="5.5" font-family="Liberation Sans,sans-serif" font-size="6.5" fill="#000080" font-weight="bold" textLength="6" lengthAdjust="spacingAndGlyphs">EI</text><path d="M5 9.500L12 2.500L15.500 5.500L9 12.500Z" stroke="#000" fill="#00c8d8" stroke-width="1" shape-rendering="auto"/><path d="M7 8.500L13 3" stroke="#e0ffff" fill="none" stroke-width="1.5" shape-rendering="auto"/><path d="M9 11L14.500 6" stroke="#008080" fill="none" stroke-width="1.2" shape-rendering="auto"/><circle cx="6" cy="10.5" r="2.7" fill="#fff" shape-rendering="auto" stroke="#000" stroke-width="1.2"/><rect x="5" y="9.5" width="2" height="2" fill="#000"/><rect x="10" y="11.5" width="6" height="1.5" fill="#000080"/><rect x="12.2" y="9.5" width="1.5" height="6" fill="#000080"/></g><g transform="translate(444,82)"><path d="M1 3L5 0V2H13V8H10V5H5V7Z" stroke="#000" fill="#00e000" stroke-width="1" shape-rendering="auto"/><path d="M14 12L10 15V13H3V7H6V10H10V9Z" stroke="#000" fill="#00e000" stroke-width="1" shape-rendering="auto"/><path d="M5 11L9 5L11.500 6.500L7.500 12.500Z" stroke="#000" fill="#00c8d8" stroke-width="0.8" shape-rendering="auto"/></g><g transform="translate(467,82)"><path d="M.5 4.500L4.500 1V3.500H12V7H4.500V8.500Z" stroke="#000" fill="#00e000" stroke-width="1" shape-rendering="auto"/><path d="M2 9.500H13L10 13.500H5Z" stroke="#000" fill="#00e000" stroke-width="1" shape-rendering="auto"/><rect x="6.5" y="0.5" width="3" height="11" fill="#000080" stroke="#000"/><path d="M5 13.500H10.500L9 15.500H6.500Z" stroke="#000" fill="#000080" stroke-width="0.6" shape-rendering="auto"/></g><g transform="translate(490,82)"><path d="M3 2L10.500 11.500M13 1.500L5 11.500" stroke="#000" fill="none" stroke-width="1.5" shape-rendering="auto"/><path d="M13 1.500L8 8" stroke="#fff" fill="none" stroke-width="0.6" shape-rendering="auto"/><ellipse cx="4" cy="13" rx="1.800" ry="2.100" fill="#fff" stroke="#000" stroke-width="1.1" shape-rendering="auto" transform="rotate(25 4 13)"/><ellipse cx="11.500" cy="13" rx="1.800" ry="2.100" fill="#fff" stroke="#000" stroke-width="1.1" shape-rendering="auto" transform="rotate(-25 11.500 13)"/><rect x="0" y="6" width="3" height="2" fill="#000080"/><path d="M4.500 5L9 1.500" stroke="#000080" fill="none" stroke-width="1.5" shape-rendering="auto"/></g><g transform="translate(513,82)"><rect x="0" y="5.5" width="15" height="1.5" fill="#000"/><rect x="0" y="4" width="1.3" height="4.5" fill="#000"/><rect x="13.7" y="4" width="1.3" height="4.5" fill="#000"/><rect x="6.7" y="8" width="1.8" height="5" fill="#000"/><rect x="5" y="13" width="5" height="1.3" fill="#000"/><circle cx="7.5" cy="6.2" r="2.3" fill="#fff" shape-rendering="auto" stroke="#000" stroke-width="1.1"/></g><g transform="translate(536,82)"><path d="M1.500 1.500L3.500 .5L14.500 13L12.500 14.500Z" stroke="#000" fill="#00d8e8" stroke-width="1" shape-rendering="auto"/><text x="8.5" y="8" font-family="Liberation Serif,sans-serif" font-size="10" fill="#000080" font-weight="bold" >T</text><rect x="1" y="11.5" width="6" height="2" fill="#000080"/><rect x="3" y="9.5" width="2" height="6" fill="#000080"/></g><g transform="translate(559,82)"><path d="M3.500 3L9 8.500V15L3.500 9.500Z" stroke="#002828" fill="#008080" stroke-width="1" shape-rendering="auto"/><rect x="5" y="1.5" width="8" height="2" fill="#ff0000"/><path d="M12 -.5L16 2.500L12 5.500Z" stroke="#ff0000" fill="#ff0000" stroke-width="0" shape-rendering="auto"/><rect x="3" y="4" width="2" height="8" fill="#000080"/><path d="M1 11L4 15L7 11Z" stroke="#000080" fill="#000080" stroke-width="0" shape-rendering="auto"/><path d="M9.500 8.500L14 13" stroke="#008000" fill="none" stroke-width="1.3" shape-rendering="auto"/><path d="M15.500 14.500L11.500 14L14.500 10.500Z" stroke="#008000" fill="#008000" stroke-width="0" shape-rendering="auto"/><path d="M7.500 2.500Q4 1.500 3 4.500Q3 8 7 7.500" stroke="#ffff00" fill="none" stroke-width="1.4" shape-rendering="auto"/></g><g transform="translate(582,82)"><rect x="3.5" y="0.5" width="6" height="6" fill="#ff8888" stroke="#000"/><rect x="9.5" y="0.5" width="6" height="6" fill="#ffff60" stroke="#000"/><rect x="9.5" y="6.5" width="6" height="6" fill="#ff8888" stroke="#000"/><rect x="2.5" y="0" width="1" height="7" fill="#000"/><text x="1" y="14.5" font-family="Liberation Serif,sans-serif" font-size="11" fill="#000" font-weight="bold" >c</text></g><g transform="translate(624,82)"><circle cx="8" cy="3.8" r="3.2" fill="#b0ffff" shape-rendering="auto" stroke="#000" stroke-width="1"/><circle cx="8" cy="12.2" r="3.2" fill="#b0ffff" shape-rendering="auto" stroke="#000" stroke-width="1"/><circle cx="3.8" cy="8" r="3.2" fill="#b0ffff" shape-rendering="auto" stroke="#000" stroke-width="1"/><circle cx="12.2" cy="8" r="3.2" fill="#b0ffff" shape-rendering="auto" stroke="#000" stroke-width="1"/><path d="M5.500 5.500L10.500 10.500M10.500 5.500L5.500 10.500" stroke="#000" fill="none" stroke-width="2.2" shape-rendering="auto"/><rect x="6" y="0" width="4" height="1.5" fill="#000"/><rect x="6" y="14.5" width="4" height="1.5" fill="#000"/></g><g transform="translate(647,82)"><rect x="7.5" y="0.5" width="7" height="10" fill="#00ffff" stroke="#000"/><rect x="4.5" y="2.5" width="8" height="11" fill="#00ffff" stroke="#000"/><rect x="1.5" y="4.5" width="9" height="11" fill="#00ffff" stroke="#000"/><text x="3" y="14" font-family="Liberation Serif,sans-serif" font-size="10" fill="#000" font-weight="bold" >D</text></g><g transform="translate(670,82)"><g transform="translate(1,1)"><circle cx="8" cy="3.8" r="3.2" fill="#fff" shape-rendering="auto" stroke="#fff" stroke-width="1"/><circle cx="8" cy="12.2" r="3.2" fill="#fff" shape-rendering="auto" stroke="#fff" stroke-width="1"/><circle cx="3.8" cy="8" r="3.2" fill="#fff" shape-rendering="auto" stroke="#fff" stroke-width="1"/><circle cx="12.2" cy="8" r="3.2" fill="#fff" shape-rendering="auto" stroke="#fff" stroke-width="1"/></g><circle cx="8" cy="3.8" r="3.2" fill="#c4c4c4" shape-rendering="auto" stroke="#909090" stroke-width="1"/><circle cx="8" cy="12.2" r="3.2" fill="#c4c4c4" shape-rendering="auto" stroke="#909090" stroke-width="1"/><circle cx="3.8" cy="8" r="3.2" fill="#c4c4c4" shape-rendering="auto" stroke="#909090" stroke-width="1"/><circle cx="12.2" cy="8" r="3.2" fill="#c4c4c4" shape-rendering="auto" stroke="#909090" stroke-width="1"/><rect x="5" y="5" width="6" height="6" fill="#8c8c8c"/></g><g transform="translate(693,82)"><g transform="translate(1,1)"><circle cx="8" cy="3.8" r="3.2" fill="#fff" shape-rendering="auto" stroke="#fff" stroke-width="1"/><circle cx="8" cy="12.2" r="3.2" fill="#fff" shape-rendering="auto" stroke="#fff" stroke-width="1"/><circle cx="3.8" cy="8" r="3.2" fill="#fff" shape-rendering="auto" stroke="#fff" stroke-width="1"/><circle cx="12.2" cy="8" r="3.2" fill="#fff" shape-rendering="auto" stroke="#fff" stroke-width="1"/></g><circle cx="8" cy="3.8" r="3.2" fill="#c4c4c4" shape-rendering="auto" stroke="#909090" stroke-width="1"/><circle cx="8" cy="12.2" r="3.2" fill="#c4c4c4" shape-rendering="auto" stroke="#909090" stroke-width="1"/><circle cx="3.8" cy="8" r="3.2" fill="#c4c4c4" shape-rendering="auto" stroke="#909090" stroke-width="1"/><circle cx="12.2" cy="8" r="3.2" fill="#c4c4c4" shape-rendering="auto" stroke="#909090" stroke-width="1"/><rect x="5" y="5" width="6" height="6" fill="#8c8c8c"/></g><g transform="translate(716,82)"><g transform="translate(1,1)"><path d="M2 2H13V13H2Z" stroke="#fff" fill="#fff" stroke-width="2" shape-rendering="auto"/></g><path d="M2.500 2.500H13V13H2.500Z" stroke="#909090" fill="#b4b4b4" stroke-width="1" shape-rendering="auto"/><rect x="5" y="5" width="6" height="6" fill="#8c8c8c"/><circle cx="2.5" cy="2.5" r="1.8" fill="#808080" shape-rendering="auto"/><circle cx="13" cy="2.5" r="1.8" fill="#808080" shape-rendering="auto"/><circle cx="13" cy="13" r="1.8" fill="#808080" shape-rendering="auto"/><circle cx="2.5" cy="13" r="1.8" fill="#808080" shape-rendering="auto"/><circle cx="7.5" cy="2" r="1" fill="#909090" shape-rendering="auto"/><circle cx="7.5" cy="13.5" r="1" fill="#909090" shape-rendering="auto"/><circle cx="2" cy="7.5" r="1" fill="#909090" shape-rendering="auto"/><circle cx="13.5" cy="7.5" r="1" fill="#909090" shape-rendering="auto"/></g></svg>
<div style="position:absolute;left:0px;top:106px;width:1122px;height:648px;background:#ffffff;"></div>
<div style="position:absolute;left:0px;top:106px;width:1121px;height:1px;background:#808080;"></div>
<div style="position:absolute;left:1px;top:107px;width:1120px;height:1px;background:#404040;"></div>
<div style="position:absolute;left:0px;top:106px;width:1px;height:647px;background:#808080;"></div>
<div style="position:absolute;left:1px;top:107px;width:1px;height:645px;background:#404040;"></div>
<div style="position:absolute;left:1120px;top:107px;width:1px;height:646px;background:#d4d0c8;"></div>
<div style="position:absolute;left:1121px;top:106px;width:1px;height:648px;background:#ffffff;"></div>
<div style="position:absolute;left:1px;top:752px;width:1120px;height:1px;background:#d4d0c8;"></div>
<div style="position:absolute;left:0px;top:753px;width:1122px;height:1px;background:#ffffff;"></div>
<div style="position:absolute;left:5px;top:111px;font-family:'Liberation Serif',serif;font-size:12px;line-height:14px;color:#000;white-space:pre;line-height:14px;">Загружение  1</div>
<svg style="left:0;top:0" width="1280" height="800" viewBox="0 0 1280 800" shape-rendering="crispEdges"><path d="M336.5 178.5V648.5M336.5 178.5H806.5M383.5 178.5V648.5M336.5 225.5H806.5M430.5 178.5V648.5M336.5 272.5H806.5M477.5 178.5V648.5M336.5 319.5H806.5M524.5 178.5V648.5M336.5 366.5H806.5M571.5 178.5V648.5M336.5 413.5H806.5M618.5 178.5V648.5M336.5 460.5H806.5M665.5 178.5V648.5M336.5 507.5H806.5M712.5 178.5V648.5M336.5 554.5H806.5M759.5 178.5V648.5M336.5 601.5H806.5M806.5 178.5V648.5M336.5 648.5H806.5M316.5 212.5V682.5M316.5 212.5H786.5M363.5 212.5V682.5M316.5 259.5H786.5M410.5 212.5V682.5M316.5 306.5H786.5M457.5 212.5V682.5M316.5 353.5H786.5M504.5 212.5V682.5M316.5 400.5H786.5M551.5 212.5V682.5M316.5 447.5H786.5M598.5 212.5V682.5M316.5 494.5H786.5M645.5 212.5V682.5M316.5 541.5H786.5M692.5 212.5V682.5M316.5 588.5H786.5M739.5 212.5V682.5M316.5 635.5H786.5M786.5 212.5V682.5M316.5 682.5H786.5" stroke="#000080" stroke-width="1" fill="none"/><path d="M316.5 212.5L336.5 178.5M316.5 259.5L336.5 225.5M316.5 306.5L336.5 272.5M316.5 353.5L336.5 319.5M316.5 400.5L336.5 366.5M316.5 447.5L336.5 413.5M316.5 494.5L336.5 460.5M316.5 541.5L336.5 507.5M316.5 588.5L336.5 554.5M316.5 635.5L336.5 601.5M316.5 682.5L336.5 648.5M363.5 212.5L383.5 178.5M363.5 259.5L383.5 225.5M363.5 306.5L383.5 272.5M363.5 353.5L383.5 319.5M363.5 400.5L383.5 366.5M363.5 447.5L383.5 413.5M363.5 494.5L383.5 460.5M363.5 541.5L383.5 507.5M363.5 588.5L383.5 554.5M363.5 635.5L383.5 601.5M363.5 682.5L383.5 648.5M410.5 212.5L430.5 178.5M410.5 259.5L430.5 225.5M410.5 306.5L430.5 272.5M410.5 353.5L430.5 319.5M410.5 400.5L430.5 366.5M410.5 447.5L430.5 413.5M410.5 494.5L430.5 460.5M410.5 541.5L430.5 507.5M410.5 588.5L430.5 554.5M410.5 635.5L430.5 601.5M410.5 682.5L430.5 648.5M457.5 212.5L477.5 178.5M457.5 259.5L477.5 225.5M457.5 306.5L477.5 272.5M457.5 353.5L477.5 319.5M457.5 400.5L477.5 366.5M457.5 447.5L477.5 413.5M457.5 494.5L477.5 460.5M457.5 541.5L477.5 507.5M457.5 588.5L477.5 554.5M457.5 635.5L477.5 601.5M457.5 682.5L477.5 648.5M504.5 212.5L524.5 178.5M504.5 259.5L524.5 225.5M504.5 306.5L524.5 272.5M504.5 353.5L524.5 319.5M504.5 400.5L524.5 366.5M504.5 447.5L524.5 413.5M504.5 494.5L524.5 460.5M504.5 541.5L524.5 507.5M504.5 588.5L524.5 554.5M504.5 635.5L524.5 601.5M504.5 682.5L524.5 648.5M551.5 212.5L571.5 178.5M551.5 259.5L571.5 225.5M551.5 306.5L571.5 272.5M551.5 353.5L571.5 319.5M551.5 400.5L571.5 366.5M551.5 447.5L571.5 413.5M551.5 494.5L571.5 460.5M551.5 541.5L571.5 507.5M551.5 588.5L571.5 554.5M551.5 635.5L571.5 601.5M551.5 682.5L571.5 648.5M598.5 212.5L618.5 178.5M598.5 259.5L618.5 225.5M598.5 306.5L618.5 272.5M598.5 353.5L618.5 319.5M598.5 400.5L618.5 366.5M598.5 447.5L618.5 413.5M598.5 494.5L618.5 460.5M598.5 541.5L618.5 507.5M598.5 588.5L618.5 554.5M598.5 635.5L618.5 601.5M598.5 682.5L618.5 648.5M645.5 212.5L665.5 178.5M645.5 259.5L665.5 225.5M645.5 306.5L665.5 272.5M645.5 353.5L665.5 319.5M645.5 400.5L665.5 366.5M645.5 447.5L665.5 413.5M645.5 494.5L665.5 460.5M645.5 541.5L665.5 507.5M645.5 588.5L665.5 554.5M645.5 635.5L665.5 601.5M645.5 682.5L665.5 648.5M692.5 212.5L712.5 178.5M692.5 259.5L712.5 225.5M692.5 306.5L712.5 272.5M692.5 353.5L712.5 319.5M692.5 400.5L712.5 366.5M692.5 447.5L712.5 413.5M692.5 494.5L712.5 460.5M692.5 541.5L712.5 507.5M692.5 588.5L712.5 554.5M692.5 635.5L712.5 601.5M692.5 682.5L712.5 648.5M739.5 212.5L759.5 178.5M739.5 259.5L759.5 225.5M739.5 306.5L759.5 272.5M739.5 353.5L759.5 319.5M739.5 400.5L759.5 366.5M739.5 447.5L759.5 413.5M739.5 494.5L759.5 460.5M739.5 541.5L759.5 507.5M739.5 588.5L759.5 554.5M739.5 635.5L759.5 601.5M739.5 682.5L759.5 648.5M786.5 212.5L806.5 178.5M786.5 259.5L806.5 225.5M786.5 306.5L806.5 272.5M786.5 353.5L806.5 319.5M786.5 400.5L806.5 366.5M786.5 447.5L806.5 413.5M786.5 494.5L806.5 460.5M786.5 541.5L806.5 507.5M786.5 588.5L806.5 554.5M786.5 635.5L806.5 601.5M786.5 682.5L806.5 648.5" stroke="#000080" stroke-width="1" fill="none"/><path d="M316 211h1v1h1v1h-1v1h-1v-1h-1v-1h1zM336 177h1v1h1v1h-1v1h-1v-1h-1v-1h1zM316 258h1v1h1v1h-1v1h-1v-1h-1v-1h1zM336 224h1v1h1v1h-1v1h-1v-1h-1v-1h1zM316 305h1v1h1v1h-1v1h-1v-1h-1v-1h1zM336 271h1v1h1v1h-1v1h-1v-1h-1v-1h1zM316 352h1v1h1v1h-1v1h-1v-1h-1v-1h1zM336 318h1v1h1v1h-1v1h-1v-1h-1v-1h1zM316 399h1v1h1v1h-1v1h-1v-1h-1v-1h1zM336 365h1v1h1v1h-1v1h-1v-1h-1v-1h1zM316 446h1v1h1v1h-1v1h-1v-1h-1v-1h1zM336 412h1v1h1v1h-1v1h-1v-1h-1v-1h1zM316 493h1v1h1v1h-1v1h-1v-1h-1v-1h1zM336 459h1v1h1v1h-1v1h-1v-1h-1v-1h1zM316 540h1v1h1v1h-1v1h-1v-1h-1v-1h1zM336 506h1v1h1v1h-1v1h-1v-1h-1v-1h1zM316 587h1v1h1v1h-1v1h-1v-1h-1v-1h1zM336 553h1v1h1v1h-1v1h-1v-1h-1v-1h1zM316 634h1v1h1v1h-1v1h-1v-1h-1v-1h1zM336 600h1v1h1v1h-1v1h-1v-1h-1v-1h1zM316 681h1v1h1v1h-1v1h-1v-1h-1v-1h1zM336 647h1v1h1v1h-1v1h-1v-1h-1v-1h1zM363 211h1v1h1v1h-1v1h-1v-1h-1v-1h1zM383 177h1v1h1v1h-1v1h-1v-1h-1v-1h1zM363 258h1v1h1v1h-1v1h-1v-1h-1v-1h1zM383 224h1v1h1v1h-1v1h-1v-1h-1v-1h1zM363 305h1v1h1v1h-1v1h-1v-1h-1v-1h1zM383 271h1v1h1v1h-1v1h-1v-1h-1v-1h1zM363 352h1v1h1v1h-1v1h-1v-1h-1v-1h1zM383 318h1v1h1v1h-1v1h-1v-1h-1v-1h1zM363 399h1v1h1v1h-1v1h-1v-1h-1v-1h1zM383 365h1v1h1v1h-1v1h-1v-1h-1v-1h1zM363 446h1v1h1v1h-1v1h-1v-1h-1v-1h1zM383 412h1v1h1v1h-1v1h-1v-1h-1v-1h1zM363 493h1v1h1v1h-1v1h-1v-1h-1v-1h1zM383 459h1v1h1v1h-1v1h-1v-1h-1v-1h1zM363 540h1v1h1v1h-1v1h-1v-1h-1v-1h1zM383 506h1v1h1v1h-1v1h-1v-1h-1v-1h1zM363 587h1v1h1v1h-1v1h-1v-1h-1v-1h1zM383 553h1v1h1v1h-1v1h-1v-1h-1v-1h1zM363 634h1v1h1v1h-1v1h-1v-1h-1v-1h1zM383 600h1v1h1v1h-1v1h-1v-1h-1v-1h1zM363 681h1v1h1v1h-1v1h-1v-1h-1v-1h1zM383 647h1v1h1v1h-1v1h-1v-1h-1v-1h1zM410 211h1v1h1v1h-1v1h-1v-1h-1v-1h1zM430 177h1v1h1v1h-1v1h-1v-1h-1v-1h1zM410 258h1v1h1v1h-1v1h-1v-1h-1v-1h1zM430 224h1v1h1v1h-1v1h-1v-1h-1v-1h1zM410 305h1v1h1v1h-1v1h-1v-1h-1v-1h1zM430 271h1v1h1v1h-1v1h-1v-1h-1v-1h1zM410 352h1v1h1v1h-1v1h-1v-1h-1v-1h1zM430 318h1v1h1v1h-1v1h-1v-1h-1v-1h1zM410 399h1v1h1v1h-1v1h-1v-1h-1v-1h1zM430 365h1v1h1v1h-1v1h-1v-1h-1v-1h1zM410 446h1v1h1v1h-1v1h-1v-1h-1v-1h1zM430 412h1v1h1v1h-1v1h-1v-1h-1v-1h1zM410 493h1v1h1v1h-1v1h-1v-1h-1v-1h1zM430 459h1v1h1v1h-1v1h-1v-1h-1v-1h1zM410 540h1v1h1v1h-1v1h-1v-1h-1v-1h1zM430 506h1v1h1v1h-1v1h-1v-1h-1v-1h1zM410 587h1v1h1v1h-1v1h-1v-1h-1v-1h1zM430 553h1v1h1v1h-1v1h-1v-1h-1v-1h1zM410 634h1v1h1v1h-1v1h-1v-1h-1v-1h1zM430 600h1v1h1v1h-1v1h-1v-1h-1v-1h1zM410 681h1v1h1v1h-1v1h-1v-1h-1v-1h1zM430 647h1v1h1v1h-1v1h-1v-1h-1v-1h1zM457 211h1v1h1v1h-1v1h-1v-1h-1v-1h1zM477 177h1v1h1v1h-1v1h-1v-1h-1v-1h1zM457 258h1v1h1v1h-1v1h-1v-1h-1v-1h1zM477 224h1v1h1v1h-1v1h-1v-1h-1v-1h1zM457 305h1v1h1v1h-1v1h-1v-1h-1v-1h1zM477 271h1v1h1v1h-1v1h-1v-1h-1v-1h1zM457 352h1v1h1v1h-1v1h-1v-1h-1v-1h1zM477 318h1v1h1v1h-1v1h-1v-1h-1v-1h1zM457 399h1v1h1v1h-1v1h-1v-1h-1v-1h1zM477 365h1v1h1v1h-1v1h-1v-1h-1v-1h1zM457 446h1v1h1v1h-1v1h-1v-1h-1v-1h1zM477 412h1v1h1v1h-1v1h-1v-1h-1v-1h1zM457 493h1v1h1v1h-1v1h-1v-1h-1v-1h1zM477 459h1v1h1v1h-1v1h-1v-1h-1v-1h1zM457 540h1v1h1v1h-1v1h-1v-1h-1v-1h1zM477 506h1v1h1v1h-1v1h-1v-1h-1v-1h1zM457 587h1v1h1v1h-1v1h-1v-1h-1v-1h1zM477 553h1v1h1v1h-1v1h-1v-1h-1v-1h1zM457 634h1v1h1v1h-1v1h-1v-1h-1v-1h1zM477 600h1v1h1v1h-1v1h-1v-1h-1v-1h1zM457 681h1v1h1v1h-1v1h-1v-1h-1v-1h1zM477 647h1v1h1v1h-1v1h-1v-1h-1v-1h1zM504 211h1v1h1v1h-1v1h-1v-1h-1v-1h1zM524 177h1v1h1v1h-1v1h-1v-1h-1v-1h1zM504 258h1v1h1v1h-1v1h-1v-1h-1v-1h1zM524 224h1v1h1v1h-1v1h-1v-1h-1v-1h1zM504 305h1v1h1v1h-1v1h-1v-1h-1v-1h1zM524 271h1v1h1v1h-1v1h-1v-1h-1v-1h1zM504 352h1v1h1v1h-1v1h-1v-1h-1v-1h1zM524 318h1v1h1v1h-1v1h-1v-1h-1v-1h1zM504 399h1v1h1v1h-1v1h-1v-1h-1v-1h1zM524 365h1v1h1v1h-1v1h-1v-1h-1v-1h1zM504 446h1v1h1v1h-1v1h-1v-1h-1v-1h1zM524 412h1v1h1v1h-1v1h-1v-1h-1v-1h1zM504 493h1v1h1v1h-1v1h-1v-1h-1v-1h1zM524 459h1v1h1v1h-1v1h-1v-1h-1v-1h1zM504 540h1v1h1v1h-1v1h-1v-1h-1v-1h1zM524 506h1v1h1v1h-1v1h-1v-1h-1v-1h1zM504 587h1v1h1v1h-1v1h-1v-1h-1v-1h1zM524 553h1v1h1v1h-1v1h-1v-1h-1v-1h1zM504 634h1v1h1v1h-1v1h-1v-1h-1v-1h1zM524 600h1v1h1v1h-1v1h-1v-1h-1v-1h1zM504 681h1v1h1v1h-1v1h-1v-1h-1v-1h1zM524 647h1v1h1v1h-1v1h-1v-1h-1v-1h1zM551 211h1v1h1v1h-1v1h-1v-1h-1v-1h1zM571 177h1v1h1v1h-1v1h-1v-1h-1v-1h1zM551 258h1v1h1v1h-1v1h-1v-1h-1v-1h1zM571 224h1v1h1v1h-1v1h-1v-1h-1v-1h1zM551 305h1v1h1v1h-1v1h-1v-1h-1v-1h1zM571 271h1v1h1v1h-1v1h-1v-1h-1v-1h1zM551 352h1v1h1v1h-1v1h-1v-1h-1v-1h1zM571 318h1v1h1v1h-1v1h-1v-1h-1v-1h1zM551 399h1v1h1v1h-1v1h-1v-1h-1v-1h1zM571 365h1v1h1v1h-1v1h-1v-1h-1v-1h1zM551 446h1v1h1v1h-1v1h-1v-1h-1v-1h1zM571 412h1v1h1v1h-1v1h-1v-1h-1v-1h1zM551 493h1v1h1v1h-1v1h-1v-1h-1v-1h1zM571 459h1v1h1v1h-1v1h-1v-1h-1v-1h1zM551 540h1v1h1v1h-1v1h-1v-1h-1v-1h1zM571 506h1v1h1v1h-1v1h-1v-1h-1v-1h1zM551 587h1v1h1v1h-1v1h-1v-1h-1v-1h1zM571 553h1v1h1v1h-1v1h-1v-1h-1v-1h1zM551 634h1v1h1v1h-1v1h-1v-1h-1v-1h1zM571 600h1v1h1v1h-1v1h-1v-1h-1v-1h1zM551 681h1v1h1v1h-1v1h-1v-1h-1v-1h1zM571 647h1v1h1v1h-1v1h-1v-1h-1v-1h1zM598 211h1v1h1v1h-1v1h-1v-1h-1v-1h1zM618 177h1v1h1v1h-1v1h-1v-1h-1v-1h1zM598 258h1v1h1v1h-1v1h-1v-1h-1v-1h1zM618 224h1v1h1v1h-1v1h-1v-1h-1v-1h1zM598 305h1v1h1v1h-1v1h-1v-1h-1v-1h1zM618 271h1v1h1v1h-1v1h-1v-1h-1v-1h1zM598 352h1v1h1v1h-1v1h-1v-1h-1v-1h1zM618 318h1v1h1v1h-1v1h-1v-1h-1v-1h1zM598 399h1v1h1v1h-1v1h-1v-1h-1v-1h1zM618 365h1v1h1v1h-1v1h-1v-1h-1v-1h1zM598 446h1v1h1v1h-1v1h-1v-1h-1v-1h1zM618 412h1v1h1v1h-1v1h-1v-1h-1v-1h1zM598 493h1v1h1v1h-1v1h-1v-1h-1v-1h1zM618 459h1v1h1v1h-1v1h-1v-1h-1v-1h1zM598 540h1v1h1v1h-1v1h-1v-1h-1v-1h1zM618 506h1v1h1v1h-1v1h-1v-1h-1v-1h1zM598 587h1v1h1v1h-1v1h-1v-1h-1v-1h1zM618 553h1v1h1v1h-1v1h-1v-1h-1v-1h1zM598 634h1v1h1v1h-1v1h-1v-1h-1v-1h1zM618 600h1v1h1v1h-1v1h-1v-1h-1v-1h1zM598 681h1v1h1v1h-1v1h-1v-1h-1v-1h1zM618 647h1v1h1v1h-1v1h-1v-1h-1v-1h1zM645 211h1v1h1v1h-1v1h-1v-1h-1v-1h1zM665 177h1v1h1v1h-1v1h-1v-1h-1v-1h1zM645 258h1v1h1v1h-1v1h-1v-1h-1v-1h1zM665 224h1v1h1v1h-1v1h-1v-1h-1v-1h1zM645 305h1v1h1v1h-1v1h-1v-1h-1v-1h1zM665 271h1v1h1v1h-1v1h-1v-1h-1v-1h1zM645 352h1v1h1v1h-1v1h-1v-1h-1v-1h1zM665 318h1v1h1v1h-1v1h-1v-1h-1v-1h1zM645 399h1v1h1v1h-1v1h-1v-1h-1v-1h1zM665 365h1v1h1v1h-1v1h-1v-1h-1v-1h1zM645 446h1v1h1v1h-1v1h-1v-1h-1v-1h1zM665 412h1v1h1v1h-1v1h-1v-1h-1v-1h1zM645 493h1v1h1v1h-1v1h-1v-1h-1v-1h1zM665 459h1v1h1v1h-1v1h-1v-1h-1v-1h1zM645 540h1v1h1v1h-1v1h-1v-1h-1v-1h1zM665 506h1v1h1v1h-1v1h-1v-1h-1v-1h1zM645 587h1v1h1v1h-1v1h-1v-1h-1v-1h1zM665 553h1v1h1v1h-1v1h-1v-1h-1v-1h1zM645 634h1v1h1v1h-1v1h-1v-1h-1v-1h1zM665 600h1v1h1v1h-1v1h-1v-1h-1v-1h1zM645 681h1v1h1v1h-1v1h-1v-1h-1v-1h1zM665 647h1v1h1v1h-1v1h-1v-1h-1v-1h1zM692 211h1v1h1v1h-1v1h-1v-1h-1v-1h1zM712 177h1v1h1v1h-1v1h-1v-1h-1v-1h1zM692 258h1v1h1v1h-1v1h-1v-1h-1v-1h1zM712 224h1v1h1v1h-1v1h-1v-1h-1v-1h1zM692 305h1v1h1v1h-1v1h-1v-1h-1v-1h1zM712 271h1v1h1v1h-1v1h-1v-1h-1v-1h1zM692 352h1v1h1v1h-1v1h-1v-1h-1v-1h1zM712 318h1v1h1v1h-1v1h-1v-1h-1v-1h1zM692 399h1v1h1v1h-1v1h-1v-1h-1v-1h1zM712 365h1v1h1v1h-1v1h-1v-1h-1v-1h1zM692 446h1v1h1v1h-1v1h-1v-1h-1v-1h1zM712 412h1v1h1v1h-1v1h-1v-1h-1v-1h1zM692 493h1v1h1v1h-1v1h-1v-1h-1v-1h1zM712 459h1v1h1v1h-1v1h-1v-1h-1v-1h1zM692 540h1v1h1v1h-1v1h-1v-1h-1v-1h1zM712 506h1v1h1v1h-1v1h-1v-1h-1v-1h1zM692 587h1v1h1v1h-1v1h-1v-1h-1v-1h1zM712 553h1v1h1v1h-1v1h-1v-1h-1v-1h1zM692 634h1v1h1v1h-1v1h-1v-1h-1v-1h1zM712 600h1v1h1v1h-1v1h-1v-1h-1v-1h1zM692 681h1v1h1v1h-1v1h-1v-1h-1v-1h1zM712 647h1v1h1v1h-1v1h-1v-1h-1v-1h1zM739 211h1v1h1v1h-1v1h-1v-1h-1v-1h1zM759 177h1v1h1v1h-1v1h-1v-1h-1v-1h1zM739 258h1v1h1v1h-1v1h-1v-1h-1v-1h1zM759 224h1v1h1v1h-1v1h-1v-1h-1v-1h1zM739 305h1v1h1v1h-1v1h-1v-1h-1v-1h1zM759 271h1v1h1v1h-1v1h-1v-1h-1v-1h1zM739 352h1v1h1v1h-1v1h-1v-1h-1v-1h1zM759 318h1v1h1v1h-1v1h-1v-1h-1v-1h1zM739 399h1v1h1v1h-1v1h-1v-1h-1v-1h1zM759 365h1v1h1v1h-1v1h-1v-1h-1v-1h1zM739 446h1v1h1v1h-1v1h-1v-1h-1v-1h1zM759 412h1v1h1v1h-1v1h-1v-1h-1v-1h1zM739 493h1v1h1v1h-1v1h-1v-1h-1v-1h1zM759 459h1v1h1v1h-1v1h-1v-1h-1v-1h1zM739 540h1v1h1v1h-1v1h-1v-1h-1v-1h1zM759 506h1v1h1v1h-1v1h-1v-1h-1v-1h1zM739 587h1v1h1v1h-1v1h-1v-1h-1v-1h1zM759 553h1v1h1v1h-1v1h-1v-1h-1v-1h1zM739 634h1v1h1v1h-1v1h-1v-1h-1v-1h1zM759 600h1v1h1v1h-1v1h-1v-1h-1v-1h1zM739 681h1v1h1v1h-1v1h-1v-1h-1v-1h1zM759 647h1v1h1v1h-1v1h-1v-1h-1v-1h1zM786 211h1v1h1v1h-1v1h-1v-1h-1v-1h1zM806 177h1v1h1v1h-1v1h-1v-1h-1v-1h1zM786 258h1v1h1v1h-1v1h-1v-1h-1v-1h1zM806 224h1v1h1v1h-1v1h-1v-1h-1v-1h1zM786 305h1v1h1v1h-1v1h-1v-1h-1v-1h1zM806 271h1v1h1v1h-1v1h-1v-1h-1v-1h1zM786 352h1v1h1v1h-1v1h-1v-1h-1v-1h1zM806 318h1v1h1v1h-1v1h-1v-1h-1v-1h1zM786 399h1v1h1v1h-1v1h-1v-1h-1v-1h1zM806 365h1v1h1v1h-1v1h-1v-1h-1v-1h1zM786 446h1v1h1v1h-1v1h-1v-1h-1v-1h1zM806 412h1v1h1v1h-1v1h-1v-1h-1v-1h1zM786 493h1v1h1v1h-1v1h-1v-1h-1v-1h1zM806 459h1v1h1v1h-1v1h-1v-1h-1v-1h1zM786 540h1v1h1v1h-1v1h-1v-1h-1v-1h1zM806 506h1v1h1v1h-1v1h-1v-1h-1v-1h1zM786 587h1v1h1v1h-1v1h-1v-1h-1v-1h1zM806 553h1v1h1v1h-1v1h-1v-1h-1v-1h1zM786 634h1v1h1v1h-1v1h-1v-1h-1v-1h1zM806 600h1v1h1v1h-1v1h-1v-1h-1v-1h1zM786 681h1v1h1v1h-1v1h-1v-1h-1v-1h1zM806 647h1v1h1v1h-1v1h-1v-1h-1v-1h1z" fill="#00ff00"/><path d="M313.5 209.5h6v6h-6zM360.5 209.5h6v6h-6zM407.5 209.5h6v6h-6zM454.5 209.5h6v6h-6zM501.5 209.5h6v6h-6zM548.5 209.5h6v6h-6zM595.5 209.5h6v6h-6zM642.5 209.5h6v6h-6zM689.5 209.5h6v6h-6zM736.5 209.5h6v6h-6zM783.5 209.5h6v6h-6zM313.5 256.5h6v6h-6zM360.5 256.5h6v6h-6zM407.5 256.5h6v6h-6zM454.5 256.5h6v6h-6zM501.5 256.5h6v6h-6zM548.5 256.5h6v6h-6zM595.5 256.5h6v6h-6zM642.5 256.5h6v6h-6zM689.5 256.5h6v6h-6zM736.5 256.5h6v6h-6zM783.5 256.5h6v6h-6zM313.5 303.5h6v6h-6zM360.5 303.5h6v6h-6zM313.5 350.5h6v6h-6zM360.5 350.5h6v6h-6zM313.5 397.5h6v6h-6zM360.5 397.5h6v6h-6zM407.5 397.5h6v6h-6zM454.5 397.5h6v6h-6zM501.5 397.5h6v6h-6zM548.5 397.5h6v6h-6zM595.5 397.5h6v6h-6zM642.5 397.5h6v6h-6zM689.5 397.5h6v6h-6zM736.5 397.5h6v6h-6zM783.5 397.5h6v6h-6zM313.5 444.5h6v6h-6zM360.5 444.5h6v6h-6zM407.5 444.5h6v6h-6zM454.5 444.5h6v6h-6zM501.5 444.5h6v6h-6zM548.5 444.5h6v6h-6zM595.5 444.5h6v6h-6zM642.5 444.5h6v6h-6zM689.5 444.5h6v6h-6zM736.5 444.5h6v6h-6zM783.5 444.5h6v6h-6zM313.5 491.5h6v6h-6zM360.5 491.5h6v6h-6zM407.5 491.5h6v6h-6zM454.5 491.5h6v6h-6zM501.5 491.5h6v6h-6zM548.5 491.5h6v6h-6zM595.5 491.5h6v6h-6zM642.5 491.5h6v6h-6zM689.5 491.5h6v6h-6zM736.5 491.5h6v6h-6zM783.5 491.5h6v6h-6zM313.5 538.5h6v6h-6zM360.5 538.5h6v6h-6zM736.5 538.5h6v6h-6zM783.5 538.5h6v6h-6zM313.5 585.5h6v6h-6zM360.5 585.5h6v6h-6zM736.5 585.5h6v6h-6zM783.5 585.5h6v6h-6zM313.5 632.5h6v6h-6zM360.5 632.5h6v6h-6zM407.5 632.5h6v6h-6zM454.5 632.5h6v6h-6zM501.5 632.5h6v6h-6zM548.5 632.5h6v6h-6zM595.5 632.5h6v6h-6zM642.5 632.5h6v6h-6zM689.5 632.5h6v6h-6zM736.5 632.5h6v6h-6zM783.5 632.5h6v6h-6zM313.5 679.5h6v6h-6zM360.5 679.5h6v6h-6zM407.5 679.5h6v6h-6zM454.5 679.5h6v6h-6zM501.5 679.5h6v6h-6zM548.5 679.5h6v6h-6zM595.5 679.5h6v6h-6zM642.5 679.5h6v6h-6zM689.5 679.5h6v6h-6zM736.5 679.5h6v6h-6zM783.5 679.5h6v6h-6z" stroke="#000" stroke-width="1" fill="none"/><g shape-rendering="auto" fill="none" stroke-width="1"><path d="M22.5 732 V713 M15 720 L22.5 713 L30 720" stroke="#ff0000"/><path d="M22.5 732 L29 718 L34 728 M25 718 L30 717" stroke="#0000ff"/><path d="M22.5 732.5 H42 M35 726 L42 732.5 L35 739" stroke="#008000"/></g><text x="18" y="708" font-family="Liberation Sans,sans-serif" font-size="11" fill="#000">Z</text><text x="28" y="714" font-family="Liberation Sans,sans-serif" font-size="11" fill="#204080">Y</text><text x="43" y="732" font-family="Liberation Sans,sans-serif" font-size="11" fill="#204080">X</text></svg>
<div style="position:absolute;left:1122px;top:106px;width:158px;height:1px;background:#808080;"></div>
<div style="position:absolute;left:1122px;top:107px;width:158px;height:1px;background:#ffffff;"></div>
<div style="position:absolute;left:1122px;top:108px;width:1px;height:645px;background:#d4d0c8;"></div>
<div style="position:absolute;left:1126px;top:112px;width:137px;height:3px;background:#d4d0c8;box-shadow:inset 1px 1px 0 #ffffff,inset -1px -1px 0 #808080;"></div>
<div style="position:absolute;left:1126px;top:115px;width:137px;height:3px;background:#d4d0c8;box-shadow:inset 1px 1px 0 #ffffff,inset -1px -1px 0 #808080;"></div>
<svg style="left:1268px;top:113px" width="6" height="5" viewBox="0 0 6 5"><path d="M.8 .6L5.200 4.400M5.200 .6L.8 4.400" stroke="#000" stroke-width="1.700" fill="none"/></svg>
<div style="position:absolute;left:1125px;top:123px;width:152px;height:625px;background:#fff;box-shadow:inset -1px -1px 0 #ffffff,inset 1px 1px 0 #808080,inset -2px -2px 0 #d4d0c8,inset 2px 2px 0 #404040;"></div>
<div style="position:absolute;left:1127px;top:125px;width:148px;height:5px;background:#d4d0c8;"></div>
<div style="position:absolute;left:1122px;top:752px;width:158px;height:1px;background:#808080;"></div>
<div style="position:absolute;left:0px;top:756px;width:996px;height:16px;background:#d4d0c8;box-shadow:inset -1px -1px 0 #ffffff,inset 1px 1px 0 #808080;"></div>
<div style="position:absolute;left:998px;top:756px;width:106px;height:16px;background:#d4d0c8;box-shadow:inset -1px -1px 0 #ffffff,inset 1px 1px 0 #808080;"></div>
<div style="position:absolute;left:1000px;top:758px;font-family:'Liberation Sans',sans-serif;font-size:11px;line-height:13px;color:#000;white-space:pre;">0 / 242</div>
<div style="position:absolute;left:1107px;top:756px;width:106px;height:16px;background:#d4d0c8;box-shadow:inset -1px -1px 0 #ffffff,inset 1px 1px 0 #808080;"></div>
<div style="position:absolute;left:1109px;top:758px;font-family:'Liberation Sans',sans-serif;font-size:11px;line-height:13px;color:#000;white-space:pre;">0 / 472</div>
<div style="position:absolute;left:1215px;top:756px;width:57px;height:16px;background:#d4d0c8;box-shadow:inset -1px -1px 0 #ffffff,inset 1px 1px 0 #808080;"></div>
<div style="position:absolute;left:1217px;top:758px;font-family:'Liberation Sans',sans-serif;font-size:11px;line-height:13px;color:#000;white-space:pre;">1 / 2</div>
<div style="position:absolute;left:476px;top:128px;width:800px;height:383px;background:#d4d0c8;box-shadow:inset -1px -1px 0 #404040,inset 1px 1px 0 #d4d0c8,inset -2px -2px 0 #808080,inset 2px 2px 0 #ffffff;"></div>
<div style="position:absolute;left:480px;top:132px;width:792px;height:18px;background:linear-gradient(90deg,#0a246a 0%,#a6caf0 100%)"></div>
<svg style="left:482px;top:134px" width="16" height="16" viewBox="0 0 16 16" shape-rendering="crispEdges"><rect x="0" y="4" width="3" height="10" fill="#c8c8c8" stroke="#808080" stroke-width=".6" shape-rendering="auto"/><rect x="1" y="6" width="1" height="2" fill="#00e000"/><rect x="3.500" y="0" width="12.500" height="10.500" rx="1" fill="#d0d0d0" stroke="#a0a0a0" stroke-width=".5" shape-rendering="auto"/><rect x="5" y="1.500" width="9.500" height="7.500" fill="#1838d8" shape-rendering="auto"/><path d="M7 5L9 7.500L12.500 2.500" stroke="#fff" stroke-width="1.5" fill="none" shape-rendering="auto"/><rect x="8" y="10.500" width="3.500" height="2" fill="#a8a8a8"/><rect x="6" y="12.500" width="7.500" height="1.500" fill="#c0c0c0"/></svg>
<div style="position:absolute;left:500px;top:135px;font-family:'Liberation Sans',sans-serif;font-size:11px;line-height:13px;color:#fff;white-space:pre;font-weight:bold;letter-spacing:0.3px;">Система</div>
<div style="position:absolute;left:1220px;top:134px;width:16px;height:14px;background:#d4d0c8;box-shadow:inset -1px -1px 0 #404040,inset 1px 1px 0 #ffffff,inset -2px -2px 0 #808080,inset 2px 2px 0 #d4d0c8;"><svg style="left:0;top:0" width="16" height="14" viewBox="0 0 16 14" shape-rendering="crispEdges"><rect x="4" y="9" width="6" height="2" fill="#000"/></svg></div>
<div style="position:absolute;left:1236px;top:134px;width:16px;height:14px;background:#d4d0c8;box-shadow:inset -1px -1px 0 #404040,inset 1px 1px 0 #ffffff,inset -2px -2px 0 #808080,inset 2px 2px 0 #d4d0c8;"><svg style="left:0;top:0" width="16" height="14" viewBox="0 0 16 14" shape-rendering="crispEdges"><rect x="3.5" y="2.5" width="8" height="7" fill="none" stroke="#000"/><rect x="3" y="2" width="9" height="2" fill="#000"/></svg></div>
<div style="position:absolute;left:1254px;top:134px;width:16px;height:14px;background:#d4d0c8;box-shadow:inset -1px -1px 0 #404040,inset 1px 1px 0 #ffffff,inset -2px -2px 0 #808080,inset 2px 2px 0 #d4d0c8;"><svg style="left:0;top:0" width="16" height="14" viewBox="0 0 16 14" shape-rendering="crispEdges"><path d="M4.5 3 L11.5 10 M11.5 3 L4.5 10" stroke="#000" stroke-width="1.5" shape-rendering="auto" fill="none"/></svg></div>
<div style="position:absolute;left:480px;top:151px;width:792px;height:1px;background:#808080;"></div>
<div style="position:absolute;left:481px;top:152px;width:790px;height:1px;background:#ffffff;"></div>
<div style="position:absolute;left:480px;top:151px;width:1px;height:35px;background:#808080;"></div>
<div style="position:absolute;left:481px;top:152px;width:1px;height:33px;background:#ffffff;"></div>
<div style="position:absolute;left:1271px;top:151px;width:1px;height:35px;background:#808080;"></div>
<div style="position:absolute;left:1270px;top:152px;width:1px;height:33px;background:#ffffff;"></div>
<div style="position:absolute;left:480px;top:185px;width:792px;height:1px;background:#808080;"></div>
<svg style="left:483px;top:155px" width="58" height="30" viewBox="0 0 58 30"><defs><linearGradient id="nb" x1="0" y1="0" x2="0" y2="1"><stop offset="0" stop-color="#dedcd6"/><stop offset=".5" stop-color="#d0cdc6"/><stop offset=".52" stop-color="#bebbb4"/><stop offset="1" stop-color="#d6d3cc"/></linearGradient><linearGradient id="nbg" x1="0" y1="0" x2="0" y2="1"><stop offset="0" stop-color="#b4b1aa"/><stop offset="1" stop-color="#c8c5bd"/></linearGradient></defs><path d="M14 2 Q28 8 42.5 2 A13 13 0 0 1 42.5 27 Q28 22 14 27 A13 13 0 0 1 14 2Z" fill="url(#nbg)"/><circle cx="14" cy="14.5" r="11.5" fill="url(#nb)" stroke="#767c84" stroke-width="1.4"/><circle cx="42.5" cy="14.5" r="11.5" fill="url(#nb)" stroke="#767c84" stroke-width="1.4"/><path d="M7 14.5L13.5 8V12H21V17H13.5V21Z" fill="#ebe9e5" stroke="#bcb9b2" stroke-width=".8"/><path d="M49.5 14.5L43 8V12H35.5V17H43V21Z" fill="#ebe9e5" stroke="#bcb9b2" stroke-width=".8"/></svg>
<div style="position:absolute;left:554px;top:158px;width:608px;height:23px;background:#d4d0c8;box-shadow:inset -1px -1px 0 #ffffff,inset 1px 1px 0 #808080;"></div>
<svg style="left:556px;top:160px" width="15" height="15" viewBox="0 0 16 16" shape-rendering="crispEdges"><rect x="0" y="4" width="3" height="10" fill="#c8c8c8" stroke="#808080" stroke-width=".6" shape-rendering="auto"/><rect x="1" y="6" width="1" height="2" fill="#00e000"/><rect x="3.500" y="0" width="12.500" height="10.500" rx="1" fill="#d0d0d0" stroke="#a0a0a0" stroke-width=".5" shape-rendering="auto"/><rect x="5" y="1.500" width="9.500" height="7.500" fill="#1838d8" shape-rendering="auto"/><path d="M7 5L9 7.500L12.500 2.500" stroke="#fff" stroke-width="1.5" fill="none" shape-rendering="auto"/><rect x="8" y="10.500" width="3.500" height="2" fill="#a8a8a8"/><rect x="6" y="12.500" width="7.500" height="1.500" fill="#c0c0c0"/></svg>
<svg style="left:579px;top:167px" width="5" height="3" viewBox="0 0 5 3" shape-rendering="crispEdges"><path d="M0 0h5v1h-1v1h-1v1h-1v-1h-1v-1h-1z" fill="#000"/></svg>
<div style="position:absolute;left:589px;top:162px;font-family:'Liberation Sans',sans-serif;font-size:11px;line-height:13px;color:#000;white-space:pre;">Панель управления</div>
<svg style="left:695px;top:167px" width="5" height="3" viewBox="0 0 5 3" shape-rendering="crispEdges"><path d="M0 0h5v1h-1v1h-1v1h-1v-1h-1v-1h-1z" fill="#000"/></svg>
<div style="position:absolute;left:706px;top:162px;font-family:'Liberation Sans',sans-serif;font-size:11px;line-height:13px;color:#000;white-space:pre;letter-spacing:-0.13px">Все элементы панели управления</div>
<svg style="left:883px;top:167px" width="5" height="3" viewBox="0 0 5 3" shape-rendering="crispEdges"><path d="M0 0h5v1h-1v1h-1v1h-1v-1h-1v-1h-1z" fill="#000"/></svg>
<div style="position:absolute;left:894px;top:162px;font-family:'Liberation Sans',sans-serif;font-size:11px;line-height:13px;color:#000;white-space:pre;">Система</div>
<svg style="left:1121px;top:167px" width="7" height="4" viewBox="0 0 7 4" shape-rendering="crispEdges"><path d="M0 0h7v1h-1v1h-1v1h-1v1h-1v-1h-1v-1h-1v-1h-1z" fill="#000"/></svg>
<svg style="left:1139px;top:159px" width="21" height="19" viewBox="0 0 21 19"><defs><linearGradient id="rg" x1="0" y1="0" x2="0" y2="1"><stop offset="0" stop-color="#7fd07f"/><stop offset=".45" stop-color="#30a830"/><stop offset="1" stop-color="#109010"/></linearGradient></defs><rect x=".5" y=".5" width="20" height="18" rx="2" fill="url(#rg)" stroke="#8a9a8a"/><path d="M3 7L8 2.5V5.5L11 9.5L8.5 10L6.5 7.5L6 9Z" fill="#fff"/><path d="M18 10L13.5 6L10 10.5L12.5 10.5V15.5H15V10.5Z" fill="#fff"/></svg>
<div style="position:absolute;left:1165px;top:158px;width:83px;height:22px;background:#fff;box-shadow:inset -1px -1px 0 #ffffff,inset 1px 1px 0 #808080,inset -2px -2px 0 #d4d0c8,inset 2px 2px 0 #404040;"></div>
<div style="position:absolute;left:1173px;top:163px;font-family:'Liberation Sans',sans-serif;font-size:11px;line-height:13px;color:#000;white-space:pre;letter-spacing:.3px">Поиск в ...</div>
<svg style="left:1249px;top:159px" width="20" height="20" viewBox="0 0 20 20"><defs><linearGradient id="sg" x1="0" y1="0" x2="0" y2="1"><stop offset="0" stop-color="#5070e0"/><stop offset=".45" stop-color="#1838c8"/><stop offset="1" stop-color="#30b0e8"/></linearGradient></defs><rect x=".5" y=".5" width="19" height="19" rx="2" fill="url(#sg)" stroke="#9098b8"/><circle cx="11.5" cy="7.5" r="3.6" fill="none" stroke="#fff" stroke-width="1.8"/><path d="M9 10.5L4.5 15.5" stroke="#e8e8f0" stroke-width="2.4" stroke-linecap="round"/></svg>
<div style="position:absolute;left:480px;top:186px;width:792px;height:321px;background:#fff;"></div>
<div style="position:absolute;left:508px;top:202px;font-family:'Liberation Sans',sans-serif;font-size:11px;line-height:13px;color:#00007f;white-space:pre;">Панель управления - домашняя</div>
<div style="position:absolute;left:508px;top:215px;font-family:'Liberation Sans',sans-serif;font-size:11px;line-height:13px;color:#00007f;white-space:pre;">страница</div>
<div style="position:absolute;left:508px;top:246px;font-family:'Liberation Sans',sans-serif;font-size:11px;line-height:13px;color:#00007f;white-space:pre;">Диспетчер устройств</div>
<div style="position:absolute;left:508px;top:270px;font-family:'Liberation Sans',sans-serif;font-size:11px;line-height:13px;color:#00007f;white-space:pre;">Настройка удаленного доступа</div>
<div style="position:absolute;left:508px;top:294px;font-family:'Liberation Sans',sans-serif;font-size:11px;line-height:13px;color:#00007f;white-space:pre;">Защита системы</div>
<div style="position:absolute;left:508px;top:318px;font-family:'Liberation Sans',sans-serif;font-size:11px;line-height:13px;color:#00007f;white-space:pre;">Дополнительные параметры</div>
<div style="position:absolute;left:508px;top:331px;font-family:'Liberation Sans',sans-serif;font-size:11px;line-height:13px;color:#00007f;white-space:pre;">системы</div>
<div style="position:absolute;left:508px;top:420px;font-family:'Liberation Sans',sans-serif;font-size:11px;line-height:13px;color:#00007f;white-space:pre;">Центр поддержки</div>
<div style="position:absolute;left:508px;top:441px;font-family:'Liberation Sans',sans-serif;font-size:11px;line-height:13px;color:#00007f;white-space:pre;">Центр обновления Windows</div>
<div style="position:absolute;left:508px;top:462px;font-family:'Liberation Sans',sans-serif;font-size:11px;line-height:13px;color:#00007f;white-space:pre;">Счетчики и средства</div>
<div style="position:absolute;left:508px;top:475px;font-family:'Liberation Sans',sans-serif;font-size:11px;line-height:13px;color:#00007f;white-space:pre;">производительности</div>
<svg style="left:486.5px;top:245px" width="16" height="17" viewBox="0 0 16 16"><path d="M8 .6Q5 2.200 1.600 2.200Q1 10 8 15.400Q15 10 14.400 2.200Q11 2.200 8 .6Z" fill="#d4d4d4" stroke="#8a8a8a" stroke-width=".8"/><path d="M8 2Q5.500 3.400 2.800 3.500L2.800 8H8Z" fill="#1c5ce0"/><path d="M8 2Q10.500 3.400 13.200 3.500L13.200 8H8Z" fill="#fcd020"/><path d="M2.800 8Q3.500 11.400 8 14.200V8Z" fill="#fcd020"/><path d="M13.200 8Q12.500 11.400 8 14.200V8Z" fill="#1c5ce0"/><path d="M3.200 4Q5.800 3.800 8 2.500Q10.200 3.800 12.800 4V5.500Q8 4 3.200 5.500Z" fill="#fff" opacity=".3"/></svg>
<svg style="left:486.5px;top:269px" width="16" height="17" viewBox="0 0 16 16"><path d="M8 .6Q5 2.200 1.600 2.200Q1 10 8 15.400Q15 10 14.400 2.200Q11 2.200 8 .6Z" fill="#d4d4d4" stroke="#8a8a8a" stroke-width=".8"/><path d="M8 2Q5.500 3.400 2.800 3.500L2.800 8H8Z" fill="#1c5ce0"/><path d="M8 2Q10.500 3.400 13.200 3.500L13.200 8H8Z" fill="#fcd020"/><path d="M2.800 8Q3.500 11.400 8 14.200V8Z" fill="#fcd020"/><path d="M13.200 8Q12.500 11.400 8 14.200V8Z" fill="#1c5ce0"/><path d="M3.200 4Q5.800 3.800 8 2.500Q10.200 3.800 12.800 4V5.500Q8 4 3.200 5.500Z" fill="#fff" opacity=".3"/></svg>
<svg style="left:486.5px;top:293px" width="16" height="17" viewBox="0 0 16 16"><path d="M8 .6Q5 2.200 1.600 2.200Q1 10 8 15.400Q15 10 14.400 2.200Q11 2.200 8 .6Z" fill="#d4d4d4" stroke="#8a8a8a" stroke-width=".8"/><path d="M8 2Q5.500 3.400 2.800 3.500L2.800 8H8Z" fill="#1c5ce0"/><path d="M8 2Q10.500 3.400 13.200 3.500L13.200 8H8Z" fill="#fcd020"/><path d="M2.800 8Q3.500 11.400 8 14.200V8Z" fill="#fcd020"/><path d="M13.200 8Q12.500 11.400 8 14.200V8Z" fill="#1c5ce0"/><path d="M3.200 4Q5.800 3.800 8 2.500Q10.200 3.800 12.800 4V5.500Q8 4 3.200 5.500Z" fill="#fff" opacity=".3"/></svg>
<svg style="left:486.5px;top:317px" width="16" height="17" viewBox="0 0 16 16"><path d="M8 .6Q5 2.200 1.600 2.200Q1 10 8 15.400Q15 10 14.400 2.200Q11 2.200 8 .6Z" fill="#d4d4d4" stroke="#8a8a8a" stroke-width=".8"/><path d="M8 2Q5.500 3.400 2.800 3.500L2.800 8H8Z" fill="#1c5ce0"/><path d="M8 2Q10.500 3.400 13.200 3.500L13.200 8H8Z" fill="#fcd020"/><path d="M2.800 8Q3.500 11.400 8 14.200V8Z" fill="#fcd020"/><path d="M13.200 8Q12.500 11.400 8 14.200V8Z" fill="#1c5ce0"/><path d="M3.200 4Q5.800 3.800 8 2.500Q10.200 3.800 12.800 4V5.500Q8 4 3.200 5.500Z" fill="#fff" opacity=".3"/></svg>
<div style="position:absolute;left:508px;top:399px;font-family:'Liberation Sans',sans-serif;font-size:11px;line-height:13px;color:#000;white-space:pre;font-weight:bold;letter-spacing:0.75px;">См. также</div>
<div style="position:absolute;left:702px;top:197px;font-family:'Liberation Sans',sans-serif;font-size:11px;line-height:13px;color:#000;white-space:pre;">Издание Windows</div>
<div style="position:absolute;left:795px;top:203px;width:450px;height:1px;background:#808080;"></div>
<div style="position:absolute;left:702px;top:381px;font-family:'Liberation Sans',sans-serif;font-size:11px;line-height:13px;color:#000;white-space:pre;">Система</div>
<div style="position:absolute;left:748px;top:387px;width:497px;height:1px;background:#808080;"></div>
<div style="position:absolute;left:723px;top:220px;font-family:'Liberation Sans',sans-serif;font-size:11px;line-height:13px;color:#000;white-space:pre;">Windows 7 Профессиональная</div>
<div style="position:absolute;left:723px;top:241px;font-family:'Liberation Sans',sans-serif;font-size:11px;line-height:13px;color:#000;white-space:pre;">© Корпорация Майкрософт (Microsoft Corp.), 2009. Все права</div>
<div style="position:absolute;left:723px;top:254px;font-family:'Liberation Sans',sans-serif;font-size:11px;line-height:13px;color:#000;white-space:pre;">защищены.</div>
<div style="position:absolute;left:723px;top:275px;font-family:'Liberation Sans',sans-serif;font-size:11px;line-height:13px;color:#000;white-space:pre;">Service Pack 1</div>
<div style="position:absolute;left:723px;top:290px;font-family:'Liberation Sans',sans-serif;font-size:11px;line-height:13px;color:#00007f;white-space:pre;">Получить доступ к дополнительным функциям, установив новый</div>
<div style="position:absolute;left:723px;top:303px;font-family:'Liberation Sans',sans-serif;font-size:11px;line-height:13px;color:#00007f;white-space:pre;">выпуск Windows 7</div>
<div style="position:absolute;left:723px;top:404px;font-family:'Liberation Sans',sans-serif;font-size:11px;line-height:13px;color:#000;white-space:pre;">Оценка:</div>
<div style="position:absolute;left:723px;top:435px;font-family:'Liberation Sans',sans-serif;font-size:11px;line-height:13px;color:#000;white-space:pre;">Процессор:</div>
<div style="position:absolute;left:723px;top:455px;font-family:'Liberation Sans',sans-serif;font-size:11px;line-height:13px;color:#000;white-space:pre;">Установленная память</div>
<div style="position:absolute;left:723px;top:468px;font-family:'Liberation Sans',sans-serif;font-size:11px;line-height:13px;color:#000;white-space:pre;">(ОЗУ):</div>
<div style="position:absolute;left:723px;top:488px;font-family:'Liberation Sans',sans-serif;font-size:11px;line-height:13px;color:#000;white-space:pre;">Тип системы:</div>
<div style="position:absolute;left:907px;top:409px;font-family:'Liberation Sans',sans-serif;font-size:11px;line-height:13px;color:#00007f;white-space:pre;">Индекс производительности Windows</div>
<div style="position:absolute;left:873px;top:435px;font-family:'Liberation Sans',sans-serif;font-size:11px;line-height:13px;color:#000;white-space:pre;letter-spacing:-0.25px">Intel(R) Core(TM)2 Duo CPU     T5670  @ 1.80GHz   1.80 GHz</div>
<div style="position:absolute;left:873px;top:455px;font-family:'Liberation Sans',sans-serif;font-size:11px;line-height:13px;color:#000;white-space:pre;">2.00 ГБ</div>
<div style="position:absolute;left:873px;top:488px;font-family:'Liberation Sans',sans-serif;font-size:11px;line-height:13px;color:#000;white-space:pre;">64-разрядная операционная система</div>
<svg style="left:873px;top:403px" width="32" height="24" viewBox="0 0 32 24"><defs><linearGradient id="bg34" x1="0" y1="0" x2="1" y2="1"><stop offset="0" stop-color="#d8ecf8"/><stop offset=".45" stop-color="#5a9ad0"/><stop offset="1" stop-color="#1c5ca8"/></linearGradient></defs><rect x="0" y="0" width="32" height="24" rx="3" fill="url(#bg34)"/><path d="M0 3Q0 0 3 0H29Q32 0 32 3V9Q16 14 0 11Z" fill="#fff" opacity=".25"/><text x="16.800" y="18.800" text-anchor="middle" font-family="Liberation Sans,sans-serif" font-weight="bold" font-size="16.500" fill="#1c4a8c" opacity=".7">3.4</text><text x="16" y="18.500" text-anchor="middle" font-family="Liberation Sans,sans-serif" font-weight="bold" font-size="16.500" fill="#fff">3.4</text></svg>
<svg style="left:1090px;top:216px" width="160" height="150" viewBox="0 0 160 150"><defs><radialGradient id="orb" cx=".5" cy=".95" r=".9"><stop offset="0" stop-color="#5cc6e0"/><stop offset=".32" stop-color="#2c88b8"/><stop offset=".62" stop-color="#15417a"/><stop offset="1" stop-color="#0c2350"/></radialGradient><radialGradient id="osh" cx=".5" cy=".5" r=".5"><stop offset=".78" stop-color="#000" stop-opacity=".5"/><stop offset="1" stop-color="#000" stop-opacity="0"/></radialGradient><linearGradient id="ogl" x1="0" y1="0" x2="0" y2="1"><stop offset="0" stop-color="#c8d8d8" stop-opacity=".5"/><stop offset="1" stop-color="#fff" stop-opacity=".04"/></linearGradient><linearGradient id="fr" x1="0" y1="0" x2=".6" y2="1"><stop offset="0" stop-color="#e8401c"/><stop offset="1" stop-color="#f8a020"/></linearGradient><linearGradient id="fg" x1="0" y1="0" x2=".6" y2="1"><stop offset="0" stop-color="#4c9c20"/><stop offset="1" stop-color="#a0d040"/></linearGradient><linearGradient id="fb" x1="1" y1="0" x2="0" y2="1"><stop offset="0" stop-color="#90c8e8"/><stop offset="1" stop-color="#1c4ca0"/></linearGradient><linearGradient id="fy" x1="0" y1="0" x2=".4" y2="1"><stop offset="0" stop-color="#f8e828"/><stop offset="1" stop-color="#f8a818"/></linearGradient></defs><circle cx="80" cy="80" r="70" fill="url(#osh)"/><circle cx="76" cy="75" r="66" fill="#0a1c40"/><circle cx="76" cy="75" r="62.500" fill="url(#orb)"/><path d="M18 62A59 59 0 0 1 134 62Q76 30 18 62Z" fill="url(#ogl)"/><path d="M50 37.5Q66 32 82.5 40.5L76 70Q60 62 42 67.5Z" fill="url(#fr)" stroke="#0c2a58" stroke-opacity=".55" stroke-width="1.2"/><path d="M85.5 44Q102 54 121 46L112.5 77Q94 84 78 74Z" fill="url(#fg)" stroke="#0c2a58" stroke-opacity=".55" stroke-width="1.2"/><path d="M39.5 72Q58 67 73 76L65.5 104Q50 96 31 102Z" fill="url(#fb)" stroke="#0c2a58" stroke-opacity=".55" stroke-width="1.2"/><path d="M75 79Q92 88 110.5 81.5L102 110Q84 117 67.5 108Z" fill="url(#fy)" stroke="#0c2a58" stroke-opacity=".55" stroke-width="1.2"/><text x="119" y="133" font-family="Liberation Sans,sans-serif" font-size="5" fill="#404040">®</text></svg>
<div style="position:absolute;left:1256px;top:187px;width:16px;height:320px;background:#eae8e4;background-image:conic-gradient(#fff 25%,#d4d0c8 0 50%,#fff 0 75%,#d4d0c8 0);background-size:2px 2px;"></div>
<div style="position:absolute;left:1256px;top:187px;width:16px;height:16px;background:#d4d0c8;box-shadow:inset -1px -1px 0 #404040,inset 1px 1px 0 #d4d0c8,inset -2px -2px 0 #808080,inset 2px 2px 0 #ffffff;"><svg style="left:0;top:0" width="16" height="16" viewBox="0 0 16 16" shape-rendering="crispEdges"><path d="M4 9h7v-1h-1v-1h-1v-1h-1v-1h-1v1h-1v1h-1v1h-1z" fill="#000"/></svg></div>
<div style="position:absolute;left:1256px;top:491px;width:16px;height:16px;background:#d4d0c8;box-shadow:inset -1px -1px 0 #404040,inset 1px 1px 0 #d4d0c8,inset -2px -2px 0 #808080,inset 2px 2px 0 #ffffff;"><svg style="left:0;top:0" width="16" height="16" viewBox="0 0 16 16" shape-rendering="crispEdges"><path d="M4 6h7v1h-1v1h-1v1h-1v1h-1v-1h-1v-1h-1v-1h-1z" fill="#000"/></svg></div>
<div style="position:absolute;left:1256px;top:221px;width:16px;height:151px;background:#d4d0c8;box-shadow:inset -1px -1px 0 #404040,inset 1px 1px 0 #d4d0c8,inset -2px -2px 0 #808080,inset 2px 2px 0 #ffffff;"></div>
<div style="position:absolute;left:0px;top:772px;width:1280px;height:1px;background:#d4d0c8;"></div>
<div style="position:absolute;left:0px;top:773px;width:1280px;height:1px;background:#ffffff;"></div>
<div style="position:absolute;left:2px;top:776px;width:51px;height:22px;background:#d4d0c8;box-shadow:inset -1px -1px 0 #404040,inset 1px 1px 0 #ffffff,inset -2px -2px 0 #808080,inset 2px 2px 0 #d4d0c8;"></div>
<svg style="left:4px;top:778px" width="17" height="17" viewBox="-1 0 16 16"><path d="M1.5 3Q4 1.5 7 3L6 7.5Q3.5 6 .5 7.5Z" fill="#e8502c"/><path d="M8 3.5Q11 5 14.5 3L13.5 7.5Q10.5 9.5 7 8Z" fill="#6cb830"/><path d="M.3 8.5Q3 7 6 8.5L5 13Q2.5 11.5 -.5 13Z" fill="#3878d8"/><path d="M6.8 9Q10 10.5 13.3 8.5L12.3 13Q9 15 5.8 13.5Z" fill="#f8c020"/></svg>
<div style="position:absolute;left:22px;top:781px;font-family:'Liberation Sans',sans-serif;font-size:11px;line-height:13px;color:#000;white-space:pre;font-weight:bold;">Пуск</div>
<svg style="left:70px;top:779px" width="16" height="16" viewBox="0 0 16 16"><path d="M1 9L9 1L15 7L7 15Z" fill="#f4f4f4" stroke="#303030" stroke-width="1"/><path d="M14.5 1L5 8L8 9L1.5 15L11 8.5L8 7.5Z" fill="#f8a020" stroke="#a05000" stroke-width=".7"/></svg>
<div style="position:absolute;left:96px;top:776px;width:160px;height:22px;background:#d4d0c8;box-shadow:inset -1px -1px 0 #404040,inset 1px 1px 0 #ffffff,inset -2px -2px 0 #808080,inset 2px 2px 0 #d4d0c8;"></div>
<svg style="left:100px;top:779px" width="16" height="16" viewBox="0 0 16 16"><defs><radialGradient id="ffg" cx=".6" cy=".3" r=".7"><stop offset="0" stop-color="#70c0f0"/><stop offset="1" stop-color="#1848b8"/></radialGradient><linearGradient id="ffo" x1="0" y1="0" x2="0" y2="1"><stop offset="0" stop-color="#f8b020"/><stop offset=".5" stop-color="#e86010"/><stop offset="1" stop-color="#b83808"/></linearGradient></defs><circle cx="9" cy="7" r="6" fill="url(#ffg)"/><path d="M2.500 2.500Q3 4 4.500 4.500Q5 2.500 7 2Q5.500 4 7 5.500Q9 5.500 9 7Q7 7.500 7 9Q9 11 11.500 10Q14 8.500 13.500 5.500Q16 8 15 11.500Q13 15.800 8 15.800Q2 15.500 .7 10Q0 5.500 2.500 2.500Z" fill="url(#ffo)"/></svg>
<div style="position:absolute;left:119px;top:781px;font-family:'Liberation Sans',sans-serif;font-size:11px;line-height:13px;color:#000;white-space:pre;">Портал ИНОЕ - Инжене...</div>
<div style="position:absolute;left:258px;top:776px;width:160px;height:22px;background:#d4d0c8;box-shadow:inset -1px -1px 0 #404040,inset 1px 1px 0 #ffffff,inset -2px -2px 0 #808080,inset 2px 2px 0 #d4d0c8;"></div>
<svg style="left:262px;top:779px" width="16" height="16" viewBox="0 0 16 16"><circle cx="8" cy="8" r="7.3" fill="#3888e0" stroke="#1c58b0" stroke-width=".8"/><path d="M2 6A6.5 6.5 0 0 1 14 6Q8 9 2 6Z" fill="#a8d8f8" opacity=".8"/><text x="8" y="11.5" text-anchor="middle" font-family="Liberation Sans,sans-serif" font-weight="bold" font-style="italic" font-size="9" fill="#fff" stroke="#184890" stroke-width=".3">Tc</text></svg>
<div style="position:absolute;left:281px;top:781px;font-family:'Liberation Sans',sans-serif;font-size:11px;line-height:13px;color:#000;white-space:pre;">Total Commander 7.56a ...</div>
<div style="position:absolute;left:420px;top:776px;width:160px;height:22px;background:#d4d0c8;box-shadow:inset -1px -1px 0 #404040,inset 1px 1px 0 #ffffff,inset -2px -2px 0 #808080,inset 2px 2px 0 #d4d0c8;"></div>
<svg style="left:424px;top:779px" width="16" height="16" viewBox="0 0 16 16" shape-rendering="crispEdges"><rect x="0" y="0" width="16" height="16" fill="#c0c0c0"/><rect x="1.500" y=".5" width="13" height="14" fill="#7c7c7c" stroke="#20d4d4"/><path d="M5.200 2Q4.200 4 5 6Q2.500 9.500 5.500 12Q8 13.200 10.500 12Q13.500 9.500 11 6Q11.800 4 10.800 2Q10 4.500 9.500 5H6.500Q6 4.500 5.200 2Z" fill="#5c5c5c" stroke="#f0f000" stroke-width=".8" shape-rendering="auto"/><path d="M6.500 2.800H9.500" stroke="#f0f000" stroke-width="1" shape-rendering="auto"/></svg>
<div style="position:absolute;left:443px;top:781px;font-family:'Liberation Sans',sans-serif;font-size:11px;line-height:13px;color:#000;white-space:pre;">ПК ЛИРА  версия 9.6 - [...</div>
<div style="position:absolute;left:582px;top:776px;width:160px;height:22px;background:#fff;box-shadow:inset -1px -1px 0 #ffffff,inset 1px 1px 0 #404040,inset -2px -2px 0 #d4d0c8,inset 2px 2px 0 #808080;"></div>
<svg style="left:587px;top:780px" width="16" height="16" viewBox="0 0 16 16" shape-rendering="crispEdges"><rect x="0" y="4" width="3" height="10" fill="#c8c8c8" stroke="#808080" stroke-width=".6" shape-rendering="auto"/><rect x="1" y="6" width="1" height="2" fill="#00e000"/><rect x="3.500" y="0" width="12.500" height="10.500" rx="1" fill="#d0d0d0" stroke="#a0a0a0" stroke-width=".5" shape-rendering="auto"/><rect x="5" y="1.500" width="9.500" height="7.500" fill="#1838d8" shape-rendering="auto"/><path d="M7 5L9 7.500L12.500 2.500" stroke="#fff" stroke-width="1.5" fill="none" shape-rendering="auto"/><rect x="8" y="10.500" width="3.500" height="2" fill="#a8a8a8"/><rect x="6" y="12.500" width="7.500" height="1.500" fill="#c0c0c0"/></svg>
<div style="position:absolute;left:606px;top:781px;font-family:'Liberation Sans',sans-serif;font-size:11px;line-height:13px;color:#000;white-space:pre;font-weight:bold;letter-spacing:0.3px">Система</div>
<div style="position:absolute;left:972px;top:780px;font-family:'Liberation Sans',sans-serif;font-size:11px;line-height:13px;color:#000;white-space:pre;">RU</div>
<div style="position:absolute;left:991px;top:777px;width:1px;height:20px;background:#808080;"></div><div style="position:absolute;left:992px;top:777px;width:1px;height:20px;background:#ffffff;"></div>
<div style="position:absolute;left:996px;top:776px;width:282px;height:22px;background:#d4d0c8;box-shadow:inset -1px -1px 0 #ffffff,inset 1px 1px 0 #808080;"></div>
<svg style="left:1003px;top:779px" width="16" height="16" viewBox="0 0 16 16"><defs><radialGradient id="ob" cx=".4" cy=".35" r=".7"><stop offset="0" stop-color="#ffd890"/><stop offset=".5" stop-color="#f07818"/><stop offset="1" stop-color="#c03808"/></radialGradient></defs><circle cx="8" cy="8" r="7.5" fill="url(#ob)"/><path d="M3 13Q8 -2 13 13" stroke="#fff" stroke-width="1" fill="none" opacity=".8"/><path d="M8 1V14" stroke="#fff" stroke-width="1" opacity=".8"/></svg>
<svg style="left:1028px;top:779px" width="16" height="16" viewBox="0 0 16 16"><circle cx="8" cy="8" r="7" fill="#e8f0ff" stroke="#1c50c8" stroke-width="1.6"/><path d="M10.500 1.500L4.500 9H7.800L5.500 14.800L12 6.800H8.600Z" fill="#1c44c0"/></svg>
<svg style="left:1052px;top:779px" width="16" height="16" viewBox="0 0 16 16"><path d="M1 1H9L15 7V15H1Z" fill="#505050"/><path d="M3 13L8 3M8 8L13 3" stroke="#e8e8e8" stroke-width="1.6"/><path d="M10 7L16 16H4Z" fill="#f8d020" stroke="#806000" stroke-width=".6"/><rect x="9.500" y="10" width="1.2" height="3" fill="#000"/><rect x="9.500" y="14" width="1.2" height="1" fill="#000"/></svg>
<svg style="left:1076px;top:779px" width="16" height="16" viewBox="0 0 16 16"><path d="M1.500 14.500V7L4 9.500L9.500 4L12 6.500L6.500 12L9 14.500Z" fill="#d8d8d8" stroke="#a8a8a8" stroke-width=".8"/><path d="M10 3L12.500 .5L15.500 3.500L13 6Z" fill="#f4f4f4" stroke="#b0b0b0" stroke-width=".7"/></svg>
<svg style="left:1099px;top:779px" width="16" height="16" viewBox="0 0 16 16"><path d="M1 9L9 1L15 7L7 15Z" fill="#f4f4f4" stroke="#303030" stroke-width="1"/><path d="M14.5 1L5 8L8 9L1.5 15L11 8.5L8 7.5Z" fill="#f8a020" stroke="#a05000" stroke-width=".7"/></svg>
<svg style="left:1122px;top:779px" width="16" height="16" viewBox="0 0 16 16"><path d="M8 6V14M5 15H11" stroke="#808080" stroke-width="1.6"/><circle cx="8" cy="5.500" r="2" fill="#c0c0c0" stroke="#707070" stroke-width=".6"/><path d="M4.500 2Q2.500 5.500 4.500 9M11.500 2Q13.500 5.500 11.500 9M2.500 .5Q-.5 5.500 2.500 10.500M13.500 .5Q16.500 5.500 13.500 10.500" stroke="#30e030" stroke-width="1.1" fill="none"/></svg>
<svg style="left:1146px;top:779px" width="16" height="16" viewBox="0 0 16 16"><path d="M2.500 1.500H8V4H10.500V14.500H2.500Z" fill="#fff" stroke="#303030" stroke-width="1.1"/><path d="M6.500 5.500H14.500V9.500Q14.500 12 12 12H11.500V15.500H9.500V12H9Q6.500 12 6.500 9.500Z" fill="#fff" stroke="#303030" stroke-width="1.1"/><path d="M8.500 2.500V5.500M12.500 2.500V5.500" stroke="#303030" stroke-width="1.5"/></svg>
<svg style="left:1170px;top:779px" width="16" height="16" viewBox="0 0 16 16"><path d="M1.500 11.500H4V14.500H1.500ZM5 9H7.500V14.500H5ZM8.500 6H11V14.500H8.500ZM12 2.500H14.500V14.500H12Z" fill="#fff" stroke="#686868" stroke-width="1"/></svg>
<svg style="left:1195px;top:779px" width="16" height="16" viewBox="0 0 16 16"><path d="M1.500 5H4.500L9 .8V15.200L4.500 11H1.500Z" fill="#f4f4f4" stroke="#686868" stroke-width="1"/><path d="M10.800 5.500Q12 8 10.800 10.500M12.500 3.500Q14.800 8 12.500 12.500M14.300 2Q17 8 14.300 14" stroke="#787878" stroke-width="1" fill="none"/></svg>
<div style="position:absolute;left:1226px;top:780px;font-family:'Liberation Sans',sans-serif;font-size:11px;line-height:13px;color:#000;white-space:pre;">14:22</div>
<svg style="left:1260px;top:780px" width="16" height="14" viewBox="0 0 16 14" shape-rendering="crispEdges"><defs><linearGradient id="dk" x1="0" y1="0" x2="1" y2="1"><stop offset="0" stop-color="#1848c0"/><stop offset="1" stop-color="#58a0f0"/></linearGradient></defs><rect x=".5" y=".5" width="15" height="13" fill="url(#dk)" stroke="#98b8e0"/><rect x="5" y="10" width="10" height="2" fill="#202020"/><rect x="2" y="9" width="2" height="2" fill="#f0a020"/></svg>
</body></html>
